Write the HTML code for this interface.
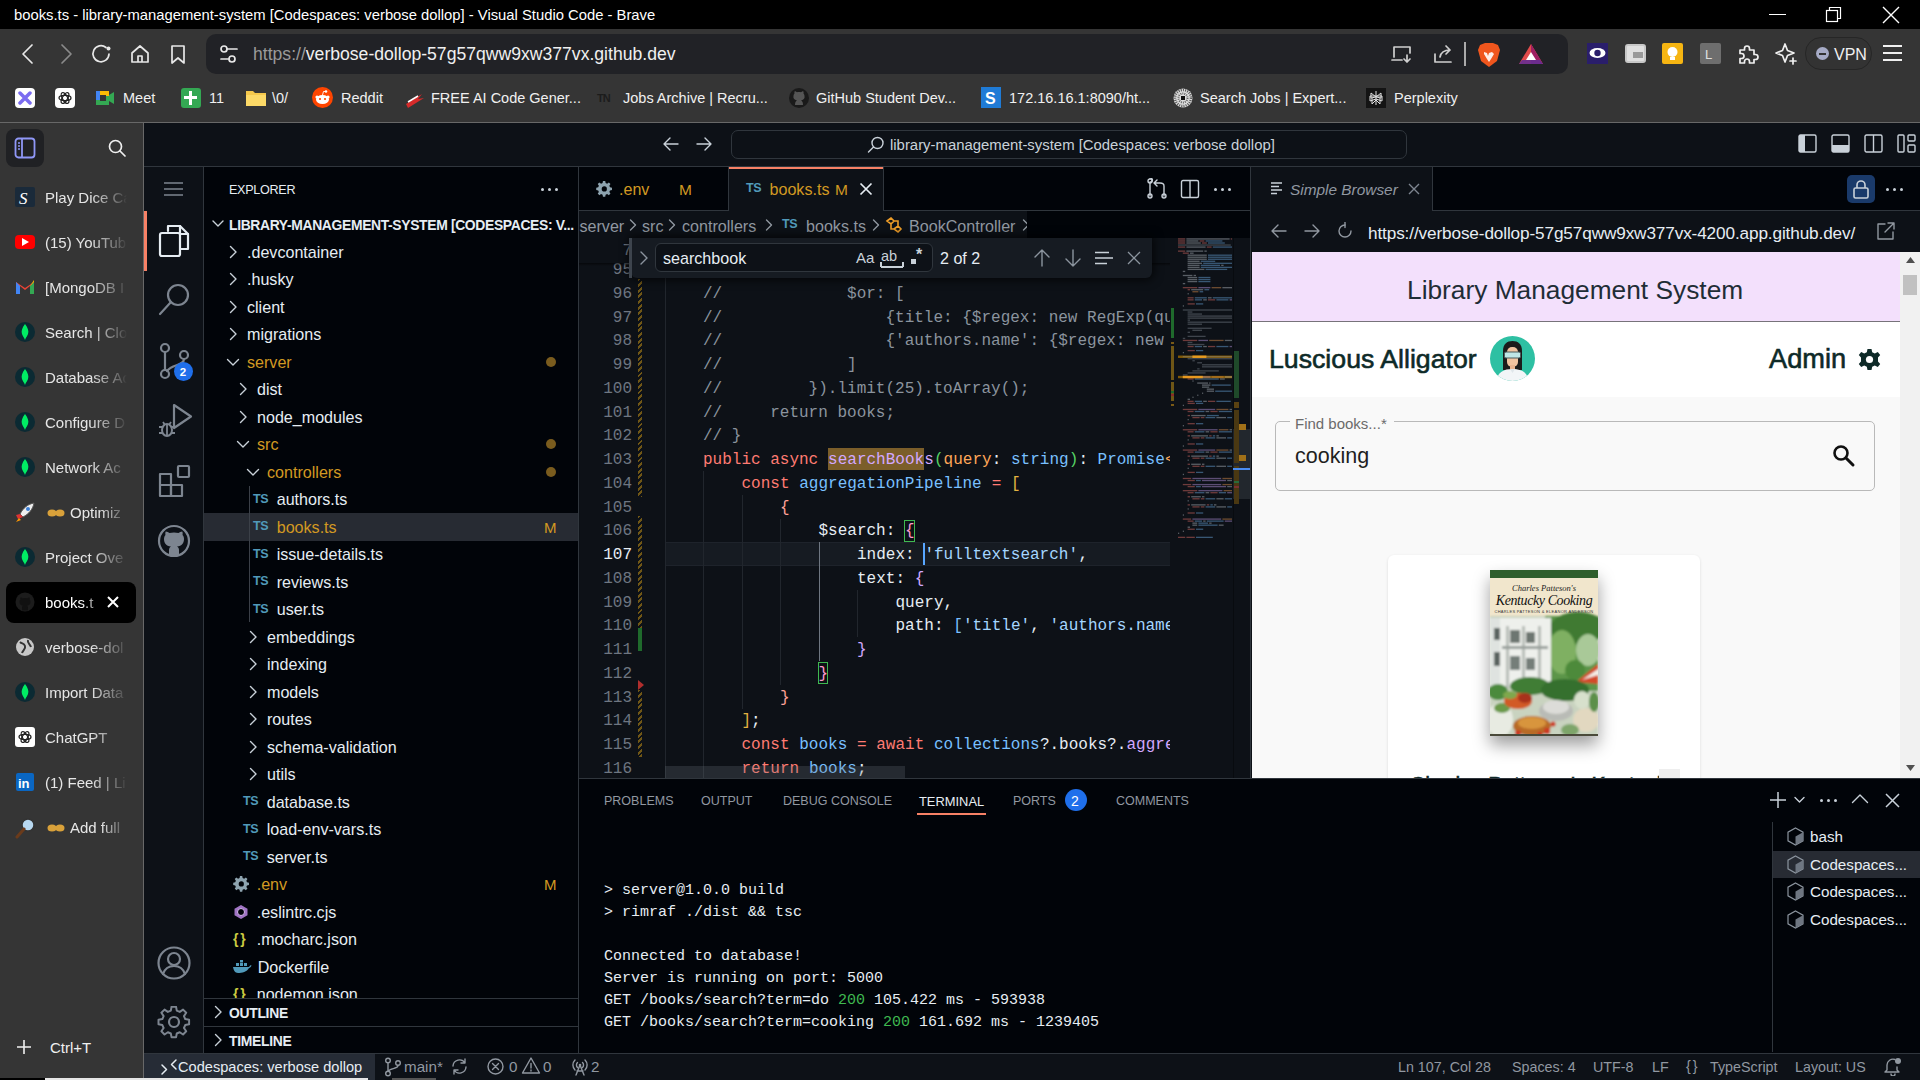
<!DOCTYPE html><html><head><meta charset="utf-8"><style>
*{margin:0;padding:0;box-sizing:border-box}
html,body{width:1920px;height:1080px;overflow:hidden;background:#000}
body{position:relative;font-family:"Liberation Sans",sans-serif}
.a{position:absolute}
.t{white-space:pre}
.m{font-family:"Liberation Mono",monospace}
.b{font-weight:bold}
</style></head><body><div class="a" style="left:0px;top:0px;width:1920px;height:29px;background:#000;"></div><div class="a t " style="left:14px;top:7.02px;font-size:14.8px;line-height:17.76px;color:#fff;">books.ts - library-management-system [Codespaces: verbose dollop] - Visual Studio Code - Brave</div><div class="a" style="left:1769px;top:14px;width:17px;height:1px;background:#fff;"></div><svg class="a" style="left:1824px;top:5px;" width="20" height="20" viewBox="0 0 20 20"><rect x="2.5" y="5.5" width="11" height="11" fill="none" stroke="#fff" stroke-width="1.2"/><path d="M5.5 5.5V2.5h11v11h-3" fill="none" stroke="#fff" stroke-width="1.2"/></svg><svg class="a" style="left:1882px;top:6px;" width="18" height="18" viewBox="0 0 18 18"><path d="M1 1L17 17M17 1L1 17" stroke="#fff" stroke-width="1.4"/></svg><div class="a" style="left:0px;top:29px;width:1920px;height:94px;background:#353535;"></div><div class="a" style="left:0px;top:122px;width:1920px;height:1px;background:#686868;"></div><svg class="a" style="left:18px;top:42px;" width="20" height="24" viewBox="0 0 20 24"><path d="M14 3L5 12L14 21" stroke="#e8e8e8" fill="none" stroke-width="1.7" stroke-linecap="round" stroke-linejoin="round"/></svg><svg class="a" style="left:56px;top:42px;" width="20" height="24" viewBox="0 0 20 24"><path d="M6 3L15 12L6 21" stroke="#8a8a8a" fill="none" stroke-width="1.7" stroke-linecap="round" stroke-linejoin="round"/></svg><svg class="a" style="left:90px;top:43px;" width="24" height="22" viewBox="0 0 24 22"><path d="M19 11A8 8 0 1 1 16 4.5" stroke="#e8e8e8" fill="none" stroke-width="1.7" stroke-linecap="round" stroke-linejoin="round"/><circle cx="18.5" cy="5.5" r="2" fill="#e8e8e8"/></svg><svg class="a" style="left:130px;top:44px;" width="20" height="20" viewBox="0 0 20 20"><path d="M2 9L10 2L18 9V18H2Z M8 18V12H12V18" stroke="#e8e8e8" fill="none" stroke-width="1.7" stroke-linecap="round" stroke-linejoin="round"/></svg><svg class="a" style="left:169px;top:44px;" width="18" height="20" viewBox="0 0 18 20"><path d="M3 2H15V19L9 14L3 19Z" stroke="#e8e8e8" fill="none" stroke-width="1.7" stroke-linecap="round" stroke-linejoin="round"/></svg><div class="a" style="left:206px;top:34px;width:1362px;height:40px;background:#212226;border-radius:10px"></div><svg class="a" style="left:218px;top:44px;" width="22" height="20" viewBox="0 0 22 20"><circle cx="6" cy="5" r="3" stroke="#e8e8e8" fill="none" stroke-width="1.7" stroke-linecap="round" stroke-linejoin="round"/><path d="M9 5H19" stroke="#e8e8e8" fill="none" stroke-width="1.7" stroke-linecap="round" stroke-linejoin="round"/><circle cx="14" cy="15" r="3" stroke="#e8e8e8" fill="none" stroke-width="1.7" stroke-linecap="round" stroke-linejoin="round"/><path d="M3 15H11" stroke="#e8e8e8" fill="none" stroke-width="1.7" stroke-linecap="round" stroke-linejoin="round"/></svg><div class="a t " style="left:253px;top:44.29px;font-size:17.6px;line-height:21.12px;color:#f0f0f0;"><span style="color:#9a9a9a">https://</span>verbose-dollop-57g57qww9xw377vx.github.dev</div><svg class="a" style="left:1390px;top:43px;" width="24" height="22" viewBox="0 0 24 22"><path d="M4 14V4H20V10 M2 17H12 M17 12V19 M14 16L17 19L20 16" stroke="#cfcfcf" fill="none" stroke-width="1.7" stroke-linecap="round" stroke-linejoin="round"/></svg><svg class="a" style="left:1432px;top:42px;" width="24" height="24" viewBox="0 0 24 24"><path d="M3 12V20H19 M8 15C9 10 13 8 18 8 M14 4L18 8L14 12" stroke="#cfcfcf" fill="none" stroke-width="1.7" stroke-linecap="round" stroke-linejoin="round"/></svg><div class="a" style="left:1464px;top:42px;width:2px;height:24px;background:#aaaaaa;"></div><svg class="a" style="left:1476px;top:41px;" width="26" height="28" viewBox="0 0 26 28"><path d="M4 4L9 2H17L22 4L24 9L21 20L13 26L5 20L2 9Z" fill="#f0561d"/><path d="M8 11L11 12L12 15L13 12L16 11L18 13L15 18L13 21L11 18L8 13Z" fill="#fff" opacity=".9"/></svg><svg class="a" style="left:1518px;top:42px;" width="26" height="24" viewBox="0 0 26 24"><path d="M13 2L25 22H1Z" fill="#e14b4b"/><path d="M13 2L25 22H13Z" fill="#9e1f63"/><path d="M13 10L18 18H8Z" fill="#fff"/><path d="M1 22H25L22 18H4Z" fill="#662d91" opacity=".9"/></svg><div class="a" style="left:1587px;top:43px;width:21px;height:21px;background:#2a1e6b;"></div><svg class="a" style="left:1589px;top:47px;" width="17" height="12" viewBox="0 0 17 12"><ellipse cx="8.5" cy="6" rx="8" ry="5" fill="#fff"/><circle cx="8.5" cy="6" r="3.2" fill="#2a1e6b"/></svg><div class="a" style="left:1625px;top:44px;width:21px;height:19px;background:#e0e0e0;border-radius:3px;border:2px solid #c8c8c8"></div><div class="a" style="left:1633px;top:52px;width:10px;height:6px;background:#9a9a9a;"></div><div class="a" style="left:1662px;top:43px;width:21px;height:21px;background:#f6b512;border-radius:2px"></div><svg class="a" style="left:1666px;top:46px;" width="13" height="15" viewBox="0 0 13 15"><circle cx="6.5" cy="6" r="5" fill="#fff"/><rect x="4" y="11" width="5" height="3" fill="#fff"/></svg><div class="a" style="left:1700px;top:43px;width:21px;height:21px;background:#6e6e6e;border-radius:2px"></div><div class="a t " style="left:1705px;top:47.14px;font-size:13px;line-height:15.60px;color:#e0e0e0;">L</div><svg class="a" style="left:1736px;top:42px;" width="24" height="24" viewBox="0 0 24 24"><path d="M4 8H8.5V6.5A2.5 2.5 0 0 1 13.5 6.5V8H18V12.5H19.5A2.5 2.5 0 0 1 19.5 17.5H18V21H13.5V19.5A2.5 2.5 0 0 0 8.5 19.5V21H4V16.5H5.5A2.5 2.5 0 0 0 5.5 11.5H4Z" stroke="#f0f0f0" fill="none" stroke-width="1.7" stroke-linecap="round" stroke-linejoin="round"/></svg><svg class="a" style="left:1774px;top:42px;" width="24" height="24" viewBox="0 0 24 24"><path d="M11 2L13.5 8.5L20 11L13.5 13.5L11 20L8.5 13.5L2 11L8.5 8.5Z" stroke="#f0f0f0" fill="none" stroke-width="1.7" stroke-linecap="round" stroke-linejoin="round"/><path d="M19 16V22M16 19H22" stroke="#f0f0f0" fill="none" stroke-width="1.7" stroke-linecap="round" stroke-linejoin="round"/></svg><div class="a" style="left:1805px;top:37px;width:67px;height:33px;background:transparent;border-radius:16px;border:1.5px solid #262626;background:#333333"></div><div class="a" style="left:1816px;top:47px;width:13px;height:13px;background:#a6abc6;border-radius:50%"></div><div class="a" style="left:1819px;top:53px;width:7px;height:1.6px;background:#333;"></div><div class="a t " style="left:1834px;top:45.28px;font-size:16px;line-height:19.20px;color:#f0f0f0;">VPN</div><svg class="a" style="left:1882px;top:44px;" width="22" height="18" viewBox="0 0 22 18"><path d="M1 2H20M1 9H20M1 16H20" stroke="#f0f0f0" stroke-width="1.8"/></svg><div class="a" style="left:15px;top:88px;width:20px;height:20px;background:#fff;border-radius:4px"></div><svg class="a" style="left:18px;top:91px;" width="14" height="14" viewBox="0 0 14 14"><path d="M2 2L12 12M12 2L2 12" stroke="#7b6cf0" stroke-width="3.5" stroke-linecap="round"/></svg><div class="a" style="left:55px;top:88px;width:20px;height:20px;background:#fff;border-radius:4px"></div><svg class="a" style="left:57px;top:90px;" width="16" height="16" viewBox="0 0 16 16"><g fill="none" stroke="#222" stroke-width="1.3"><ellipse cx="8" cy="8" rx="6" ry="2.6"/><ellipse cx="8" cy="8" rx="6" ry="2.6" transform="rotate(60 8 8)"/><ellipse cx="8" cy="8" rx="6" ry="2.6" transform="rotate(120 8 8)"/></g></svg><svg class="a" style="left:95px;top:89px;" width="20" height="18" viewBox="0 0 20 18"><rect x="1" y="2" width="13" height="14" fill="#34a853"/><rect x="1" y="2" width="13" height="5" fill="#fbbc04"/><rect x="1" y="2" width="4" height="9" fill="#4285f4"/><rect x="5" y="6" width="6" height="6" fill="#353535"/><path d="M14 6L19 3V15L14 12Z" fill="#34a853"/></svg><div class="a t " style="left:123px;top:90.21px;font-size:14.5px;line-height:17.40px;color:#f0f0f0;">Meet</div><div class="a" style="left:181px;top:88px;width:20px;height:20px;background:#34a853;border-radius:3px"></div><div class="a" style="left:189px;top:91px;width:3px;height:14px;background:#fff;"></div><div class="a" style="left:184px;top:96px;width:13px;height:3px;background:#fff;"></div><div class="a t " style="left:209px;top:90.21px;font-size:14.5px;line-height:17.40px;color:#f0f0f0;">11</div><svg class="a" style="left:245px;top:89px;" width="22" height="18" viewBox="0 0 22 18"><path d="M1 2H8L10 4H21V17H1Z" fill="#f5c84c"/><rect x="1" y="6" width="20" height="11" fill="#fcd967"/></svg><div class="a t " style="left:272px;top:90.21px;font-size:14.5px;line-height:17.40px;color:#f0f0f0;">\0/</div><div class="a" style="left:312px;top:87px;width:21px;height:21px;background:#ff4500;border-radius:50%"></div><svg class="a" style="left:314px;top:89px;" width="17" height="17" viewBox="0 0 17 17"><ellipse cx="8.5" cy="10.5" rx="6.5" ry="4.5" fill="#fff"/><circle cx="3" cy="8" r="1.6" fill="#fff"/><circle cx="14" cy="8" r="1.6" fill="#fff"/><circle cx="12" cy="2.5" r="1.3" fill="#fff"/><path d="M8.5 6L9.5 2.5L12 2.5" stroke="#fff" stroke-width="0.9" fill="none"/><circle cx="6" cy="10" r="1.1" fill="#ff4500"/><circle cx="11" cy="10" r="1.1" fill="#ff4500"/></svg><div class="a t " style="left:341px;top:90.21px;font-size:14.5px;line-height:17.40px;color:#f0f0f0;">Reddit</div><svg class="a" style="left:404px;top:88px;" width="22" height="20" viewBox="0 0 22 20"><path d="M2 16L18 6L14 11L20 10L4 20Z" fill="#d62a2a"/><path d="M4 14L14 8" stroke="#fff" stroke-width="1.5"/></svg><div class="a t " style="left:431px;top:90.21px;font-size:14.5px;line-height:17.40px;color:#f0f0f0;">FREE AI Code Gener...</div><div class="a t " style="left:597px;top:92.38px;font-size:11px;line-height:13.20px;color:#1c1c1c;font-weight:bold;letter-spacing:-1px">TN</div><div class="a t " style="left:623px;top:90.21px;font-size:14.5px;line-height:17.40px;color:#f0f0f0;">Jobs Archive | Recru...</div><svg class="a" style="left:789px;top:88px;" width="20" height="20" viewBox="0 0 20 20"><circle cx="10" cy="10" r="10" fill="#1a1a1a"/><path d="M6 17C6 14 7 13 8 12.5C5 12 4 10 4.5 8C4.5 7 5 6 5.5 5.5C5.3 4.8 5.3 4 5.7 3.2C6.5 3.2 7.5 3.8 8 4.2C9.3 3.9 10.7 3.9 12 4.2C12.5 3.8 13.5 3.2 14.3 3.2C14.7 4 14.7 4.8 14.5 5.5C15 6 15.5 7 15.5 8C16 10 15 12 12 12.5C13 13 14 14 14 17" fill="#555"/></svg><div class="a t " style="left:816px;top:90.21px;font-size:14.5px;line-height:17.40px;color:#f0f0f0;">GitHub Student Dev...</div><div class="a" style="left:981px;top:87px;width:20px;height:21px;background:#1f7bd6;"></div><div class="a t " style="left:985px;top:89.28px;font-size:16px;line-height:19.20px;color:#fff;font-weight:bold">S</div><div class="a t " style="left:1009px;top:90.21px;font-size:14.5px;line-height:17.40px;color:#f0f0f0;">172.16.16.1:8090/ht...</div><svg class="a" style="left:1173px;top:88px;" width="20" height="20" viewBox="0 0 20 20"><circle cx="10" cy="10" r="9.5" fill="#ddd"/><circle cx="10" cy="10" r="8" fill="none" stroke="#555" stroke-width="2.5" stroke-dasharray="1 1.2"/><circle cx="10" cy="10" r="4.5" fill="none" stroke="#666" stroke-width="2" stroke-dasharray="1 1"/><rect x="8" y="8" width="4" height="4" fill="#111"/></svg><div class="a t " style="left:1200px;top:90.21px;font-size:14.5px;line-height:17.40px;color:#f0f0f0;">Search Jobs | Expert...</div><div class="a" style="left:1366px;top:88px;width:20px;height:20px;background:#141414;"></div><svg class="a" style="left:1368px;top:90px;" width="16" height="16" viewBox="0 0 16 16"><path d="M8 1V15M3 3L8 7L13 3M3 3V8L8 7M13 3V8L8 7M2 6H14V11L8 9L2 11Z M4 8V14L8 10L12 14V8" stroke="#e0e0e0" stroke-width="1" fill="none"/></svg><div class="a t " style="left:1394px;top:90.21px;font-size:14.5px;line-height:17.40px;color:#f0f0f0;">Perplexity</div><div class="a" style="left:0px;top:123px;width:143px;height:957px;background:#353535;"></div><div class="a" style="left:143px;top:123px;width:1px;height:957px;background:#686868;"></div><div class="a" style="left:6px;top:129px;width:38px;height:38px;background:#202124;border-radius:8px"></div><svg class="a" style="left:14px;top:137px;" width="22" height="22" viewBox="0 0 22 22"><rect x="1.5" y="1.5" width="19" height="19" rx="3" fill="none" stroke="#8f97f7" stroke-width="1.8"/><path d="M8 1.5V20.5" stroke="#8f97f7" stroke-width="1.8"/><path d="M4 6H6M4 9H6M4 12H6" stroke="#8f97f7" stroke-width="1.4"/></svg><svg class="a" style="left:107px;top:138px;" width="20" height="20" viewBox="0 0 20 20"><circle cx="8.5" cy="8.5" r="6" fill="none" stroke="#f0f0f0" stroke-width="1.7"/><path d="M13 13L18 18" stroke="#f0f0f0" stroke-width="1.7" stroke-linecap="round"/></svg><div class="a" style="left:15px;top:187px;width:20px;height:20px;background:#1a2a3a;border-radius:2px"></div><div class="a t " style="left:19px;top:188.66px;font-size:17px;line-height:20.40px;color:#fff;font-style:italic;font-family:Liberation Serif">S</div><div class="a t " style="left:45px;top:188.90px;font-size:15px;line-height:18.00px;color:#e6e6e6;-webkit-mask-image:linear-gradient(90deg,#000 55%,rgba(0,0,0,.25) 92%,transparent 100%);width:82px;overflow:hidden">Play Dice Ca</div><div class="a" style="left:15px;top:235px;width:20px;height:14px;background:#ff0000;border-radius:4px"></div><svg class="a" style="left:22px;top:238px;" width="8" height="8" viewBox="0 0 8 8"><path d="M0 0L7 4L0 8Z" fill="#fff"/></svg><div class="a t " style="left:45px;top:233.90px;font-size:15px;line-height:18.00px;color:#e6e6e6;-webkit-mask-image:linear-gradient(90deg,#000 55%,rgba(0,0,0,.25) 92%,transparent 100%);width:82px;overflow:hidden">(15) YouTub</div><svg class="a" style="left:15px;top:279px;" width="20" height="16" viewBox="0 0 20 16"><path d="M1 3V15H5V7L10 11L15 7V15H19V3L10 9Z" fill="#ea4335"/><path d="M1 3V15H5V7Z" fill="#4285f4"/><path d="M15 7V15H19V3Z" fill="#34a853"/><path d="M15 7L19 3V1Z" fill="#fbbc04"/></svg><div class="a t " style="left:45px;top:278.90px;font-size:15px;line-height:18.00px;color:#e6e6e6;-webkit-mask-image:linear-gradient(90deg,#000 55%,rgba(0,0,0,.25) 92%,transparent 100%);width:82px;overflow:hidden">[MongoDB I</div><div class="a" style="left:15px;top:322px;width:20px;height:20px;background:#0b2a33;border-radius:50%"></div><svg class="a" style="left:20px;top:324px;" width="10" height="16" viewBox="0 0 10 16"><path d="M5 0C8 4 9 7 8 10C7.5 12 6 13 5 16C4 13 2.5 12 2 10C1 7 2 4 5 0Z" fill="#00ed64"/></svg><div class="a t " style="left:45px;top:323.90px;font-size:15px;line-height:18.00px;color:#e6e6e6;-webkit-mask-image:linear-gradient(90deg,#000 55%,rgba(0,0,0,.25) 92%,transparent 100%);width:82px;overflow:hidden">Search | Clo</div><div class="a" style="left:15px;top:367px;width:20px;height:20px;background:#0b2a33;border-radius:50%"></div><svg class="a" style="left:20px;top:369px;" width="10" height="16" viewBox="0 0 10 16"><path d="M5 0C8 4 9 7 8 10C7.5 12 6 13 5 16C4 13 2.5 12 2 10C1 7 2 4 5 0Z" fill="#00ed64"/></svg><div class="a t " style="left:45px;top:368.90px;font-size:15px;line-height:18.00px;color:#e6e6e6;-webkit-mask-image:linear-gradient(90deg,#000 55%,rgba(0,0,0,.25) 92%,transparent 100%);width:82px;overflow:hidden">Database Ac</div><div class="a" style="left:15px;top:412px;width:20px;height:20px;background:#0b2a33;border-radius:50%"></div><svg class="a" style="left:20px;top:414px;" width="10" height="16" viewBox="0 0 10 16"><path d="M5 0C8 4 9 7 8 10C7.5 12 6 13 5 16C4 13 2.5 12 2 10C1 7 2 4 5 0Z" fill="#00ed64"/></svg><div class="a t " style="left:45px;top:413.90px;font-size:15px;line-height:18.00px;color:#e6e6e6;-webkit-mask-image:linear-gradient(90deg,#000 55%,rgba(0,0,0,.25) 92%,transparent 100%);width:82px;overflow:hidden">Configure D</div><div class="a" style="left:15px;top:457px;width:20px;height:20px;background:#0b2a33;border-radius:50%"></div><svg class="a" style="left:20px;top:459px;" width="10" height="16" viewBox="0 0 10 16"><path d="M5 0C8 4 9 7 8 10C7.5 12 6 13 5 16C4 13 2.5 12 2 10C1 7 2 4 5 0Z" fill="#00ed64"/></svg><div class="a t " style="left:45px;top:458.90px;font-size:15px;line-height:18.00px;color:#e6e6e6;-webkit-mask-image:linear-gradient(90deg,#000 55%,rgba(0,0,0,.25) 92%,transparent 100%);width:82px;overflow:hidden">Network Ac</div><svg class="a" style="left:14px;top:501px;" width="22" height="22" viewBox="0 0 22 22"><path d="M20 2C14 3 9 7 6 13L9 16C15 13 19 8 20 2Z" fill="#eee" stroke="#555" stroke-width="1"/><circle cx="14" cy="8" r="2" fill="#3b7fd6"/><path d="M6 13L2 14L4 18L9 16" fill="#d33"/><path d="M5 17L2 21L7 19Z" fill="#f90"/></svg><svg class="a" style="left:47px;top:508px;" width="18" height="10" viewBox="0 0 18 10"><ellipse cx="5" cy="5" rx="4.5" ry="3.5" fill="#d9a13a"/><ellipse cx="13" cy="5" rx="4.5" ry="3.5" fill="#d9a13a"/></svg><div class="a t " style="left:70px;top:503.90px;font-size:15px;line-height:18.00px;color:#e6e6e6;-webkit-mask-image:linear-gradient(90deg,#000 55%,rgba(0,0,0,.25) 92%,transparent 100%);width:56px;overflow:hidden">Optimiz</div><div class="a" style="left:15px;top:547px;width:20px;height:20px;background:#0b2a33;border-radius:50%"></div><svg class="a" style="left:20px;top:549px;" width="10" height="16" viewBox="0 0 10 16"><path d="M5 0C8 4 9 7 8 10C7.5 12 6 13 5 16C4 13 2.5 12 2 10C1 7 2 4 5 0Z" fill="#00ed64"/></svg><div class="a t " style="left:45px;top:548.90px;font-size:15px;line-height:18.00px;color:#e6e6e6;-webkit-mask-image:linear-gradient(90deg,#000 55%,rgba(0,0,0,.25) 92%,transparent 100%);width:82px;overflow:hidden">Project Ove</div><div class="a" style="left:6px;top:582px;width:130px;height:41px;background:#000;border-radius:8px"></div><svg class="a" style="left:15px;top:592px;" width="20" height="20" viewBox="0 0 20 20"><circle cx="10" cy="10" r="9.5" fill="#1c1c1c"/><path d="M7 18.5V15.5C7 14.5 7.5 14 8 13.7C5.5 13.3 4.5 12 4.5 10C4.5 9 4.8 8.2 5.4 7.6C5.2 7 5.2 6.2 5.5 5.5C6.3 5.5 7.2 6 7.7 6.4C9.2 6 10.8 6 12.3 6.4C12.8 6 13.7 5.5 14.5 5.5C14.8 6.2 14.8 7 14.6 7.6C15.2 8.2 15.5 9 15.5 10C15.5 12 14.5 13.3 12 13.7C12.5 14 13 14.5 13 15.5V18.5" fill="#111"/></svg><div class="a t " style="left:45px;top:593.90px;font-size:15px;line-height:18.00px;color:#fff;width:60px;overflow:hidden;-webkit-mask-image:linear-gradient(90deg,#000 60%,rgba(0,0,0,.3) 95%)">books.t</div><svg class="a" style="left:106px;top:595px;" width="14" height="14" viewBox="0 0 14 14"><path d="M2 2L12 12M12 2L2 12" stroke="#fff" stroke-width="2"/></svg><div class="a" style="left:16px;top:638px;width:18px;height:18px;background:#c8c8c8;border-radius:50%"></div><svg class="a" style="left:16px;top:638px;" width="18" height="18" viewBox="0 0 18 18"><path d="M4 4C6 6 8 5 9 8C10 11 7 12 6 15M12 2C11 5 14 6 15 9" stroke="#353535" stroke-width="2" fill="none"/></svg><div class="a t " style="left:45px;top:638.90px;font-size:15px;line-height:18.00px;color:#e6e6e6;-webkit-mask-image:linear-gradient(90deg,#000 55%,rgba(0,0,0,.25) 92%,transparent 100%);width:82px;overflow:hidden">verbose-dol</div><div class="a" style="left:15px;top:682px;width:20px;height:20px;background:#0b2a33;border-radius:50%"></div><svg class="a" style="left:20px;top:684px;" width="10" height="16" viewBox="0 0 10 16"><path d="M5 0C8 4 9 7 8 10C7.5 12 6 13 5 16C4 13 2.5 12 2 10C1 7 2 4 5 0Z" fill="#00ed64"/></svg><div class="a t " style="left:45px;top:683.90px;font-size:15px;line-height:18.00px;color:#e6e6e6;-webkit-mask-image:linear-gradient(90deg,#000 55%,rgba(0,0,0,.25) 92%,transparent 100%);width:82px;overflow:hidden">Import Data</div><div class="a" style="left:15px;top:727px;width:20px;height:20px;background:#fff;border-radius:3px"></div><svg class="a" style="left:17px;top:729px;" width="16" height="16" viewBox="0 0 16 16"><g fill="none" stroke="#222" stroke-width="1.3"><ellipse cx="8" cy="8" rx="6" ry="2.6"/><ellipse cx="8" cy="8" rx="6" ry="2.6" transform="rotate(60 8 8)"/><ellipse cx="8" cy="8" rx="6" ry="2.6" transform="rotate(120 8 8)"/></g></svg><div class="a t " style="left:45px;top:728.90px;font-size:15px;line-height:18.00px;color:#e6e6e6;-webkit-mask-image:linear-gradient(90deg,#000 55%,rgba(0,0,0,.25) 92%,transparent 100%);width:82px;overflow:hidden">ChatGPT</div><div class="a" style="left:16px;top:773px;width:18px;height:18px;background:#0a66c2;border-radius:2px"></div><div class="a t " style="left:18px;top:776.14px;font-size:13px;line-height:15.60px;color:#fff;font-weight:bold">in</div><div class="a t " style="left:45px;top:773.90px;font-size:15px;line-height:18.00px;color:#e6e6e6;-webkit-mask-image:linear-gradient(90deg,#000 55%,rgba(0,0,0,.25) 92%,transparent 100%);width:82px;overflow:hidden">(1) Feed | Li</div><svg class="a" style="left:14px;top:817px;" width="22" height="22" viewBox="0 0 22 22"><circle cx="14" cy="8" r="6" fill="#b8d8f0" stroke="#333" stroke-width="1.5"/><path d="M10 12L3 20" stroke="#6b3b1b" stroke-width="3" stroke-linecap="round"/></svg><svg class="a" style="left:47px;top:823px;" width="18" height="10" viewBox="0 0 18 10"><ellipse cx="5" cy="5" rx="4.5" ry="3.5" fill="#d9a13a"/><ellipse cx="13" cy="5" rx="4.5" ry="3.5" fill="#d9a13a"/></svg><div class="a t " style="left:70px;top:818.90px;font-size:15px;line-height:18.00px;color:#e6e6e6;-webkit-mask-image:linear-gradient(90deg,#000 55%,rgba(0,0,0,.25) 92%,transparent 100%);width:56px;overflow:hidden">Add full</div><svg class="a" style="left:16px;top:1039px;" width="16" height="16" viewBox="0 0 16 16"><path d="M8 1V15M1 8H15" stroke="#f0f0f0" stroke-width="1.6"/></svg><div class="a t " style="left:50px;top:1038.90px;font-size:15px;line-height:18.00px;color:#f0f0f0;">Ctrl+T</div><div class="a" style="left:144px;top:123px;width:1776px;height:957px;background:#0d1117;"></div><div class="a" style="left:144px;top:166px;width:1776px;height:1px;background:#30363d;"></div><svg class="a" style="left:662px;top:136px;" width="18" height="16" viewBox="0 0 18 16"><path d="M2 8H16M8 2L2 8L8 14" stroke="#c9d1d9" fill="none" stroke-width="1.4" stroke-linecap="round" stroke-linejoin="round"/></svg><svg class="a" style="left:695px;top:136px;" width="18" height="16" viewBox="0 0 18 16"><path d="M2 8H16M10 2L16 8L10 14" stroke="#c9d1d9" fill="none" stroke-width="1.4" stroke-linecap="round" stroke-linejoin="round"/></svg><div class="a" style="left:731px;top:130px;width:676px;height:29px;background:#0d1117;border:1px solid #30363d;border-radius:7px;background:#0d1117"></div><svg class="a" style="left:867px;top:136px;" width="18" height="18" viewBox="0 0 18 18"><circle cx="10.5" cy="7" r="5.5" stroke="#c9d1d9" fill="none" stroke-width="1.4" stroke-linecap="round" stroke-linejoin="round"/><path d="M6.5 11L1.5 16" stroke="#c9d1d9" fill="none" stroke-width="1.4" stroke-linecap="round" stroke-linejoin="round"/></svg><div class="a t " style="left:890px;top:136.96px;font-size:14.9px;line-height:17.88px;color:#c9d1d9;">library-management-system [Codespaces: verbose dollop]</div><svg class="a" style="left:1798px;top:134px;" width="20" height="20" viewBox="0 0 20 20"><rect x="1" y="1" width="17" height="17" rx="1.5" stroke="#c9d1d9" fill="none" stroke-width="1.4" stroke-linecap="round" stroke-linejoin="round"/><rect x="1" y="1" width="6" height="17" fill="#c9d1d9"/></svg><svg class="a" style="left:1831px;top:134px;" width="20" height="20" viewBox="0 0 20 20"><rect x="1" y="1" width="17" height="17" rx="1.5" stroke="#c9d1d9" fill="none" stroke-width="1.4" stroke-linecap="round" stroke-linejoin="round"/><rect x="1" y="11" width="17" height="7" fill="#c9d1d9"/></svg><svg class="a" style="left:1864px;top:134px;" width="20" height="20" viewBox="0 0 20 20"><rect x="1" y="1" width="17" height="17" rx="1.5" stroke="#c9d1d9" fill="none" stroke-width="1.4" stroke-linecap="round" stroke-linejoin="round"/><path d="M9.5 1V18" stroke="#c9d1d9" stroke-width="1.4"/></svg><svg class="a" style="left:1897px;top:134px;" width="20" height="20" viewBox="0 0 20 20"><rect x="1" y="1" width="6" height="17" rx="1" stroke="#c9d1d9" fill="none" stroke-width="1.4" stroke-linecap="round" stroke-linejoin="round"/><rect x="11" y="1" width="7" height="6" rx="1" stroke="#c9d1d9" fill="none" stroke-width="1.4" stroke-linecap="round" stroke-linejoin="round"/><rect x="11" y="11" width="7" height="7" rx="1" stroke="#c9d1d9" fill="none" stroke-width="1.4" stroke-linecap="round" stroke-linejoin="round"/></svg><div class="a" style="left:203px;top:167px;width:1px;height:886px;background:#30363d;"></div><svg class="a" style="left:163px;top:181px;" width="22" height="16" viewBox="0 0 22 16"><path d="M1 2H20M1 8H20M1 14H20" stroke="#7d8590" stroke-width="1.4"/></svg><div class="a" style="left:144px;top:211px;width:3px;height:60px;background:#f78166;"></div><svg class="a" style="left:157px;top:223px;" width="34" height="36" viewBox="0 0 34 36"><path d="M11 8V3H23L31 11V26H24" stroke="#e6edf3" fill="none" stroke-width="2.2" stroke-linecap="round" stroke-linejoin="round"/><path d="M23 3V11H31" stroke="#e6edf3" fill="none" stroke-width="2.2" stroke-linecap="round" stroke-linejoin="round"/><rect x="3" y="10" width="20" height="23" rx="2" stroke="#e6edf3" fill="none" stroke-width="2.2" stroke-linecap="round" stroke-linejoin="round"/></svg><svg class="a" style="left:157px;top:281px;" width="36" height="36" viewBox="0 0 36 36"><circle cx="21" cy="14" r="10" stroke="#7d8590" fill="none" stroke-width="2.2" stroke-linecap="round" stroke-linejoin="round"/><path d="M14 21L3 33" stroke="#7d8590" fill="none" stroke-width="2.2" stroke-linecap="round" stroke-linejoin="round"/></svg><svg class="a" style="left:158px;top:342px;" width="34" height="38" viewBox="0 0 34 38"><circle cx="7" cy="6" r="4" stroke="#7d8590" fill="none" stroke-width="2.2" stroke-linecap="round" stroke-linejoin="round"/><circle cx="7" cy="32" r="4" stroke="#7d8590" fill="none" stroke-width="2.2" stroke-linecap="round" stroke-linejoin="round"/><circle cx="26" cy="13" r="4" stroke="#7d8590" fill="none" stroke-width="2.2" stroke-linecap="round" stroke-linejoin="round"/><path d="M7 10V28M26 17C26 24 14 22 9 29" stroke="#7d8590" fill="none" stroke-width="2.2" stroke-linecap="round" stroke-linejoin="round"/></svg><div class="a" style="left:174px;top:362px;width:19px;height:19px;background:#1f6feb;border-radius:50%"></div><div class="a t " style="left:179.8px;top:365.57px;font-size:11.5px;line-height:13.80px;color:#fff;font-weight:bold">2</div><svg class="a" style="left:155px;top:400px;" width="40" height="40" viewBox="0 0 40 40"><path d="M19 5L36 16.5L19 28Z" stroke="#7d8590" fill="none" stroke-width="2.2" stroke-linecap="round" stroke-linejoin="round"/><ellipse cx="12" cy="30" rx="5" ry="6" fill="#0d1117" stroke="#7d8590" stroke-width="2"/><path d="M4 27H8M4 33H8M16 27H20M16 33H20M8 22L10 25M16 22L14 25M12 24V36" stroke="#7d8590" stroke-width="1.8"/></svg><svg class="a" style="left:157px;top:463px;" width="36" height="36" viewBox="0 0 36 36"><rect x="3" y="11" width="11" height="11" stroke="#7d8590" fill="none" stroke-width="2.2" stroke-linecap="round" stroke-linejoin="round"/><rect x="3" y="22" width="11" height="11" stroke="#7d8590" fill="none" stroke-width="2.2" stroke-linecap="round" stroke-linejoin="round"/><rect x="14" y="22" width="11" height="11" stroke="#7d8590" fill="none" stroke-width="2.2" stroke-linecap="round" stroke-linejoin="round"/><rect x="21" y="3" width="11" height="11" rx="1" stroke="#7d8590" fill="none" stroke-width="2.2" stroke-linecap="round" stroke-linejoin="round"/></svg><svg class="a" style="left:156px;top:523px;" width="36" height="36" viewBox="0 0 36 36"><circle cx="18" cy="18" r="15" stroke="#7d8590" fill="none" stroke-width="2.2" stroke-linecap="round" stroke-linejoin="round"/><path d="M13 32V27C13 25 14 24 15 23.5C10 23 8 20 8 16C8 14.5 8.5 13 9.5 12C9.2 11 9.2 9.5 9.8 8.5C11 8.5 12.5 9.3 13.5 10C16.3 9.3 19.7 9.3 22.5 10C23.5 9.3 25 8.5 26.2 8.5C26.8 9.5 26.8 11 26.5 12C27.5 13 28 14.5 28 16C28 20 26 23 21 23.5C22 24 23 25 23 27V32Z" fill="#7d8590"/></svg><svg class="a" style="left:156px;top:945px;" width="36" height="36" viewBox="0 0 36 36"><circle cx="18" cy="18" r="15.5" stroke="#7d8590" fill="none" stroke-width="2.2" stroke-linecap="round" stroke-linejoin="round"/><circle cx="18" cy="14" r="6" stroke="#7d8590" fill="none" stroke-width="2.2" stroke-linecap="round" stroke-linejoin="round"/><path d="M7 29C9 23 13 21 18 21C23 21 27 23 29 29" stroke="#7d8590" fill="none" stroke-width="2.2" stroke-linecap="round" stroke-linejoin="round"/></svg><svg class="a" style="left:157px;top:1006px;" width="34" height="34" viewBox="0 0 34 34"><path d="M14.5 2.5H19.5L20.3 6.8L23.6 8.2L27.3 5.7L30.8 9.2L28.3 12.9L29.7 16.2L34 17V22L29.7 22.8L28.3 26.1L30.8 29.8L27.3 33.3L23.6 30.8L20.3 32.2L19.5 36.5H14.5L13.7 32.2L10.4 30.8L6.7 33.3L3.2 29.8L5.7 26.1L4.3 22.8L0 22V17L4.3 16.2L5.7 12.9L3.2 9.2L6.7 5.7L10.4 8.2L13.7 6.8Z" transform="translate(1.5 -1.5) scale(0.9)" stroke="#7d8590" fill="none" stroke-width="2.2" stroke-linecap="round" stroke-linejoin="round"/><circle cx="17" cy="16" r="5" stroke="#7d8590" fill="none" stroke-width="2.2" stroke-linecap="round" stroke-linejoin="round"/></svg><div class="a" style="left:204px;top:167px;width:375px;height:886px;background:#010409;"></div><div class="a" style="left:578px;top:167px;width:1px;height:886px;background:#30363d;"></div><div class="a t " style="left:229px;top:182.89px;font-size:12.6px;line-height:15.12px;color:#e6edf3;letter-spacing:-0.3px">EXPLORER</div><div class="a" style="left:541px;top:188px;width:3px;height:3px;background:#c9d1d9;border-radius:50%"></div><div class="a" style="left:548px;top:188px;width:3px;height:3px;background:#c9d1d9;border-radius:50%"></div><div class="a" style="left:555px;top:188px;width:3px;height:3px;background:#c9d1d9;border-radius:50%"></div><svg class="a" style="left:211px;top:218px;" width="14" height="12" viewBox="0 0 14 12"><path d="M2 3L7 8L12 3" stroke="#c9d1d9" fill="none" stroke-width="1.4" stroke-linecap="round" stroke-linejoin="round"/></svg><div class="a t " style="left:229px;top:217.08px;font-size:13.9px;line-height:16.68px;color:#e6edf3;font-weight:bold;letter-spacing:-0.35px">LIBRARY-MANAGEMENT-SYSTEM [CODESPACES: V...</div><div class="a" style="left:204px;top:238px;width:374px;height:760px;overflow:hidden"><svg class="a" style="left:24px;top:6.75px;" width="10" height="14" viewBox="0 0 10 14"><path d="M2.5 1.5L8 7L2.5 12.5" stroke="#c9d1d9" fill="none" stroke-width="1.4" stroke-linecap="round" stroke-linejoin="round"/></svg><div class="a t " style="left:43px;top:4.97px;font-size:16.1px;line-height:19.32px;color:#e6edf3;">.devcontainer</div><svg class="a" style="left:24px;top:34.25px;" width="10" height="14" viewBox="0 0 10 14"><path d="M2.5 1.5L8 7L2.5 12.5" stroke="#c9d1d9" fill="none" stroke-width="1.4" stroke-linecap="round" stroke-linejoin="round"/></svg><div class="a t " style="left:43px;top:32.47px;font-size:16.1px;line-height:19.32px;color:#e6edf3;">.husky</div><svg class="a" style="left:24px;top:61.75px;" width="10" height="14" viewBox="0 0 10 14"><path d="M2.5 1.5L8 7L2.5 12.5" stroke="#c9d1d9" fill="none" stroke-width="1.4" stroke-linecap="round" stroke-linejoin="round"/></svg><div class="a t " style="left:43px;top:59.97px;font-size:16.1px;line-height:19.32px;color:#e6edf3;">client</div><svg class="a" style="left:24px;top:89.25px;" width="10" height="14" viewBox="0 0 10 14"><path d="M2.5 1.5L8 7L2.5 12.5" stroke="#c9d1d9" fill="none" stroke-width="1.4" stroke-linecap="round" stroke-linejoin="round"/></svg><div class="a t " style="left:43px;top:87.47px;font-size:16.1px;line-height:19.32px;color:#e6edf3;">migrations</div><svg class="a" style="left:22px;top:118.75px;" width="14" height="10" viewBox="0 0 14 10"><path d="M1.5 2.5L7 8L12.5 2.5" stroke="#c9d1d9" fill="none" stroke-width="1.4" stroke-linecap="round" stroke-linejoin="round"/></svg><div class="a t " style="left:43px;top:114.97px;font-size:16.1px;line-height:19.32px;color:#d29922;">server</div><div class="a" style="left:342px;top:118.75px;width:10px;height:10px;background:#7a5c1e;border-radius:50%"></div><svg class="a" style="left:34px;top:144.25px;" width="10" height="14" viewBox="0 0 10 14"><path d="M2.5 1.5L8 7L2.5 12.5" stroke="#c9d1d9" fill="none" stroke-width="1.4" stroke-linecap="round" stroke-linejoin="round"/></svg><div class="a t " style="left:53px;top:142.47px;font-size:16.1px;line-height:19.32px;color:#e6edf3;">dist</div><svg class="a" style="left:34px;top:171.75px;" width="10" height="14" viewBox="0 0 10 14"><path d="M2.5 1.5L8 7L2.5 12.5" stroke="#c9d1d9" fill="none" stroke-width="1.4" stroke-linecap="round" stroke-linejoin="round"/></svg><div class="a t " style="left:53px;top:169.97px;font-size:16.1px;line-height:19.32px;color:#e6edf3;">node_modules</div><svg class="a" style="left:32px;top:201.25px;" width="14" height="10" viewBox="0 0 14 10"><path d="M1.5 2.5L7 8L12.5 2.5" stroke="#c9d1d9" fill="none" stroke-width="1.4" stroke-linecap="round" stroke-linejoin="round"/></svg><div class="a t " style="left:53px;top:197.47px;font-size:16.1px;line-height:19.32px;color:#d29922;">src</div><div class="a" style="left:342px;top:201.25px;width:10px;height:10px;background:#7a5c1e;border-radius:50%"></div><svg class="a" style="left:42px;top:228.75px;" width="14" height="10" viewBox="0 0 14 10"><path d="M1.5 2.5L7 8L12.5 2.5" stroke="#c9d1d9" fill="none" stroke-width="1.4" stroke-linecap="round" stroke-linejoin="round"/></svg><div class="a t " style="left:63px;top:224.97px;font-size:16.1px;line-height:19.32px;color:#d29922;">controllers</div><div class="a" style="left:342px;top:228.75px;width:10px;height:10px;background:#7a5c1e;border-radius:50%"></div><div class="a t " style="left:49px;top:253.70px;font-size:12.5px;line-height:15.00px;color:#519aba;font-weight:bold;letter-spacing:-0.5px">TS</div><div class="a t " style="left:72.7px;top:252.47px;font-size:16.1px;line-height:19.32px;color:#e6edf3;">authors.ts</div><div class="a" style="left:0px;top:275.0px;width:374px;height:27.5px;background:#272b33;"></div><div class="a t " style="left:49px;top:281.20px;font-size:12.5px;line-height:15.00px;color:#519aba;font-weight:bold;letter-spacing:-0.5px">TS</div><div class="a t " style="left:72.7px;top:279.97px;font-size:16.1px;line-height:19.32px;color:#d29922;">books.ts</div><div class="a t " style="left:340px;top:280.65px;font-size:15px;line-height:18.00px;color:#d29922;">M</div><div class="a t " style="left:49px;top:308.70px;font-size:12.5px;line-height:15.00px;color:#519aba;font-weight:bold;letter-spacing:-0.5px">TS</div><div class="a t " style="left:72.7px;top:307.47px;font-size:16.1px;line-height:19.32px;color:#e6edf3;">issue-details.ts</div><div class="a t " style="left:49px;top:336.20px;font-size:12.5px;line-height:15.00px;color:#519aba;font-weight:bold;letter-spacing:-0.5px">TS</div><div class="a t " style="left:72.7px;top:334.97px;font-size:16.1px;line-height:19.32px;color:#e6edf3;">reviews.ts</div><div class="a t " style="left:49px;top:363.70px;font-size:12.5px;line-height:15.00px;color:#519aba;font-weight:bold;letter-spacing:-0.5px">TS</div><div class="a t " style="left:72.7px;top:362.47px;font-size:16.1px;line-height:19.32px;color:#e6edf3;">user.ts</div><svg class="a" style="left:44px;top:391.75px;" width="10" height="14" viewBox="0 0 10 14"><path d="M2.5 1.5L8 7L2.5 12.5" stroke="#c9d1d9" fill="none" stroke-width="1.4" stroke-linecap="round" stroke-linejoin="round"/></svg><div class="a t " style="left:63px;top:389.97px;font-size:16.1px;line-height:19.32px;color:#e6edf3;">embeddings</div><svg class="a" style="left:44px;top:419.25px;" width="10" height="14" viewBox="0 0 10 14"><path d="M2.5 1.5L8 7L2.5 12.5" stroke="#c9d1d9" fill="none" stroke-width="1.4" stroke-linecap="round" stroke-linejoin="round"/></svg><div class="a t " style="left:63px;top:417.47px;font-size:16.1px;line-height:19.32px;color:#e6edf3;">indexing</div><svg class="a" style="left:44px;top:446.75px;" width="10" height="14" viewBox="0 0 10 14"><path d="M2.5 1.5L8 7L2.5 12.5" stroke="#c9d1d9" fill="none" stroke-width="1.4" stroke-linecap="round" stroke-linejoin="round"/></svg><div class="a t " style="left:63px;top:444.97px;font-size:16.1px;line-height:19.32px;color:#e6edf3;">models</div><svg class="a" style="left:44px;top:474.25px;" width="10" height="14" viewBox="0 0 10 14"><path d="M2.5 1.5L8 7L2.5 12.5" stroke="#c9d1d9" fill="none" stroke-width="1.4" stroke-linecap="round" stroke-linejoin="round"/></svg><div class="a t " style="left:63px;top:472.47px;font-size:16.1px;line-height:19.32px;color:#e6edf3;">routes</div><svg class="a" style="left:44px;top:501.75px;" width="10" height="14" viewBox="0 0 10 14"><path d="M2.5 1.5L8 7L2.5 12.5" stroke="#c9d1d9" fill="none" stroke-width="1.4" stroke-linecap="round" stroke-linejoin="round"/></svg><div class="a t " style="left:63px;top:499.97px;font-size:16.1px;line-height:19.32px;color:#e6edf3;">schema-validation</div><svg class="a" style="left:44px;top:529.25px;" width="10" height="14" viewBox="0 0 10 14"><path d="M2.5 1.5L8 7L2.5 12.5" stroke="#c9d1d9" fill="none" stroke-width="1.4" stroke-linecap="round" stroke-linejoin="round"/></svg><div class="a t " style="left:63px;top:527.47px;font-size:16.1px;line-height:19.32px;color:#e6edf3;">utils</div><div class="a t " style="left:39px;top:556.20px;font-size:12.5px;line-height:15.00px;color:#519aba;font-weight:bold;letter-spacing:-0.5px">TS</div><div class="a t " style="left:62.7px;top:554.97px;font-size:16.1px;line-height:19.32px;color:#e6edf3;">database.ts</div><div class="a t " style="left:39px;top:583.70px;font-size:12.5px;line-height:15.00px;color:#519aba;font-weight:bold;letter-spacing:-0.5px">TS</div><div class="a t " style="left:62.7px;top:582.47px;font-size:16.1px;line-height:19.32px;color:#e6edf3;">load-env-vars.ts</div><div class="a t " style="left:39px;top:611.20px;font-size:12.5px;line-height:15.00px;color:#519aba;font-weight:bold;letter-spacing:-0.5px">TS</div><div class="a t " style="left:62.7px;top:609.97px;font-size:16.1px;line-height:19.32px;color:#e6edf3;">server.ts</div><svg class="a" style="left:29px;top:638.25px;" width="16" height="16" viewBox="0 0 16 16"><path d="M6.8 0.5H9.2L9.6 2.6L11.2 3.3L13 2.1L14.7 3.8L13.5 5.6L14.2 7.2L16.3 7.6V10L14.2 10.4L13.5 12L14.7 13.8L13 15.5L11.2 14.3L9.6 15L9.2 17.1H6.8L6.4 15L4.8 14.3L3 15.5L1.3 13.8L2.5 12L1.8 10.4L-0.3 10V7.6L1.8 7.2L2.5 5.6L1.3 3.8L3 2.1L4.8 3.3L6.4 2.6Z" transform="translate(0.5 -0.5) scale(0.95)" fill="#8ea4b0"/><circle cx="8.3" cy="7.9" r="2.6" fill="#010409"/></svg><div class="a t " style="left:52.7px;top:637.47px;font-size:16.1px;line-height:19.32px;color:#d29922;">.env</div><div class="a t " style="left:340px;top:638.15px;font-size:15px;line-height:18.00px;color:#d29922;">M</div><svg class="a" style="left:29px;top:665.75px;" width="16" height="16" viewBox="0 0 16 16"><path d="M8 1L14.5 4.7V11.3L8 15L1.5 11.3V4.7Z" fill="#a074c4"/><circle cx="8" cy="8" r="3.5" fill="#010409" stroke="#d7b7f0" stroke-width="1"/></svg><div class="a t " style="left:52.7px;top:664.97px;font-size:16.1px;line-height:19.32px;color:#e6edf3;">.eslintrc.cjs</div><div class="a t " style="left:29px;top:692.77px;font-size:14px;line-height:16.80px;color:#cbcb41;font-weight:bold;letter-spacing:-1px">{ }</div><div class="a t " style="left:52.7px;top:692.47px;font-size:16.1px;line-height:19.32px;color:#e6edf3;">.mocharc.json</div><svg class="a" style="left:28px;top:721.75px;" width="20" height="14" viewBox="0 0 20 14"><path d="M1 7H17C18 5 19 5 19.5 5.5C19 7 18 8 17 8C15 12 10 13 6 13C3 13 1.5 10 1 7Z" fill="#519aba"/><rect x="4" y="3" width="3" height="3" fill="#519aba"/><rect x="8" y="3" width="3" height="3" fill="#519aba"/><rect x="8" y="0" width="3" height="2.5" fill="#519aba"/><rect x="12" y="3" width="3" height="3" fill="#519aba"/></svg><div class="a t " style="left:53.7px;top:719.97px;font-size:16.1px;line-height:19.32px;color:#e6edf3;">Dockerfile</div><div class="a t " style="left:29px;top:747.77px;font-size:14px;line-height:16.80px;color:#cbcb41;font-weight:bold;letter-spacing:-1px">{ }</div><div class="a t " style="left:52.7px;top:747.47px;font-size:16.1px;line-height:19.32px;color:#e6edf3;">nodemon.json</div><div class="a" style="left:45px;top:248px;width:1px;height:136px;background:#3b4048;"></div></div><div class="a" style="left:204px;top:998px;width:374px;height:1px;background:#30363d;"></div><div class="a" style="left:204px;top:1025.5px;width:374px;height:1px;background:#30363d;"></div><svg class="a" style="left:213px;top:1005px;" width="10" height="14" viewBox="0 0 10 14"><path d="M2.5 1.5L8 7L2.5 12.5" stroke="#c9d1d9" fill="none" stroke-width="1.4" stroke-linecap="round" stroke-linejoin="round"/></svg><div class="a t " style="left:229px;top:1005.08px;font-size:13.9px;line-height:16.68px;color:#e6edf3;font-weight:bold;letter-spacing:-0.3px">OUTLINE</div><svg class="a" style="left:213px;top:1032.5px;" width="10" height="14" viewBox="0 0 10 14"><path d="M2.5 1.5L8 7L2.5 12.5" stroke="#c9d1d9" fill="none" stroke-width="1.4" stroke-linecap="round" stroke-linejoin="round"/></svg><div class="a t " style="left:229px;top:1032.58px;font-size:13.9px;line-height:16.68px;color:#e6edf3;font-weight:bold;letter-spacing:-0.3px">TIMELINE</div><div class="a" style="left:579px;top:167px;width:671px;height:43.5px;background:#010409;"></div><div class="a" style="left:579px;top:209.5px;width:671px;height:1px;background:#30363d;"></div><div class="a" style="left:728px;top:167px;width:1px;height:43px;background:#30363d;"></div><svg class="a" style="left:596px;top:181px;" width="16" height="16" viewBox="0 0 16 16"><path d="M6.8 0.5H9.2L9.6 2.6L11.2 3.3L13 2.1L14.7 3.8L13.5 5.6L14.2 7.2L16.3 7.6V10L14.2 10.4L13.5 12L14.7 13.8L13 15.5L11.2 14.3L9.6 15L9.2 17.1H6.8L6.4 15L4.8 14.3L3 15.5L1.3 13.8L2.5 12L1.8 10.4L-0.3 10V7.6L1.8 7.2L2.5 5.6L1.3 3.8L3 2.1L4.8 3.3L6.4 2.6Z" transform="translate(0.5 -0.5) scale(0.95)" fill="#8ea4b0"/><circle cx="8.3" cy="7.9" r="2.6" fill="#010409"/></svg><div class="a t " style="left:619px;top:180.22px;font-size:16.1px;line-height:19.32px;color:#d29922;">.env</div><div class="a t " style="left:679px;top:180.59px;font-size:15.5px;line-height:18.60px;color:#d29922;">M</div><div class="a" style="left:729px;top:167px;width:154px;height:43.5px;background:#0d1117;"></div><div class="a" style="left:729px;top:167px;width:154px;height:2px;background:#f78166;"></div><div class="a" style="left:883px;top:167px;width:1px;height:43px;background:#30363d;"></div><div class="a t " style="left:746px;top:181.45px;font-size:12.5px;line-height:15.00px;color:#519aba;font-weight:bold;letter-spacing:-0.5px">TS</div><div class="a t " style="left:769.5px;top:180.22px;font-size:16.1px;line-height:19.32px;color:#d29922;">books.ts</div><div class="a t " style="left:835px;top:180.59px;font-size:15.5px;line-height:18.60px;color:#d29922;">M</div><svg class="a" style="left:859px;top:182px;" width="14" height="14" viewBox="0 0 14 14"><path d="M1.5 1.5L12.5 12.5M12.5 1.5L1.5 12.5" stroke="#e6edf3" stroke-width="1.7"/></svg><svg class="a" style="left:1146px;top:178px;" width="22" height="22" viewBox="0 0 22 22"><path d="M4 4V18M4 4A2 2 0 1 0 4 0.1M18 18V8C18 6 16 5 14 5H9M11 2L8 5L11 8" stroke="#c9d1d9" fill="none" stroke-width="1.4" stroke-linecap="round" stroke-linejoin="round"/><circle cx="4" cy="18" r="2" stroke="#c9d1d9" fill="none" stroke-width="1.4" stroke-linecap="round" stroke-linejoin="round"/><circle cx="18" cy="18" r="2" stroke="#c9d1d9" fill="none" stroke-width="1.4" stroke-linecap="round" stroke-linejoin="round"/><circle cx="4" cy="3" r="2" stroke="#c9d1d9" fill="none" stroke-width="1.4" stroke-linecap="round" stroke-linejoin="round"/></svg><svg class="a" style="left:1180px;top:179px;" width="20" height="20" viewBox="0 0 20 20"><rect x="1.5" y="1.5" width="17" height="17" rx="1.5" stroke="#c9d1d9" fill="none" stroke-width="1.4" stroke-linecap="round" stroke-linejoin="round"/><path d="M10 1.5V18.5" stroke="#c9d1d9" stroke-width="1.4"/></svg><div class="a" style="left:1214px;top:188px;width:3px;height:3px;background:#c9d1d9;border-radius:50%"></div><div class="a" style="left:1221px;top:188px;width:3px;height:3px;background:#c9d1d9;border-radius:50%"></div><div class="a" style="left:1228px;top:188px;width:3px;height:3px;background:#c9d1d9;border-radius:50%"></div><div class="a t " style="left:579.5px;top:216.72px;font-size:16.1px;line-height:19.32px;color:#9198a1;">server</div><svg class="a" style="left:629px;top:219px;" width="8" height="12" viewBox="0 0 8 12"><path d="M1.5 1L6.5 6L1.5 11" stroke="#9198a1" fill="none" stroke-width="1.4" stroke-linecap="round" stroke-linejoin="round"/></svg><div class="a t " style="left:642px;top:216.72px;font-size:16.1px;line-height:19.32px;color:#9198a1;">src</div><svg class="a" style="left:668px;top:219px;" width="8" height="12" viewBox="0 0 8 12"><path d="M1.5 1L6.5 6L1.5 11" stroke="#9198a1" fill="none" stroke-width="1.4" stroke-linecap="round" stroke-linejoin="round"/></svg><div class="a t " style="left:682px;top:216.72px;font-size:16.1px;line-height:19.32px;color:#9198a1;">controllers</div><svg class="a" style="left:765px;top:219px;" width="8" height="12" viewBox="0 0 8 12"><path d="M1.5 1L6.5 6L1.5 11" stroke="#9198a1" fill="none" stroke-width="1.4" stroke-linecap="round" stroke-linejoin="round"/></svg><div class="a t " style="left:782px;top:217.45px;font-size:12.5px;line-height:15.00px;color:#519aba;font-weight:bold;letter-spacing:-0.5px">TS</div><div class="a t " style="left:806px;top:216.72px;font-size:16.1px;line-height:19.32px;color:#9198a1;">books.ts</div><svg class="a" style="left:872px;top:219px;" width="8" height="12" viewBox="0 0 8 12"><path d="M1.5 1L6.5 6L1.5 11" stroke="#9198a1" fill="none" stroke-width="1.4" stroke-linecap="round" stroke-linejoin="round"/></svg><svg class="a" style="left:885px;top:217px;" width="19" height="17" viewBox="0 0 19 17"><path d="M2 4L6 1L9 4L6 7Z M9 12L13 9L16 12L13 15Z M6 7V12H9 M9 4H13V9" fill="none" stroke="#ee9d28" stroke-width="1.6"/></svg><div class="a t " style="left:909px;top:216.72px;font-size:16.1px;line-height:19.32px;color:#9198a1;">BookController</div><svg class="a" style="left:1022px;top:219px;" width="8" height="12" viewBox="0 0 8 12"><path d="M1.5 1L6.5 6L1.5 11" stroke="#9198a1" fill="none" stroke-width="1.4" stroke-linecap="round" stroke-linejoin="round"/></svg><div class="a" style="left:1027px;top:210.5px;width:223px;height:27.5px;background:#010409;"></div><div class="a" style="left:579px;top:238px;width:591px;height:540px;overflow:hidden"><div class="a" style="left:85.5px;top:304.375px;width:505.5px;height:23.75px;background:#161b22;"></div><div class="a" style="left:85.5px;top:304.375px;width:505.5px;height:1px;background:#1e232b;"></div><div class="a" style="left:85.5px;top:327.125px;width:505.5px;height:1px;background:#1e232b;"></div><div class="a" style="left:85.5px;top:19.375px;width:1px;height:522.5px;background:#21262d;"></div><div class="a" style="left:124.0px;top:233.125px;width:1px;height:308.75px;background:#21262d;"></div><div class="a" style="left:162.5px;top:256.875px;width:1px;height:213.75px;background:#21262d;"></div><div class="a" style="left:201.0px;top:280.625px;width:1px;height:166.25px;background:#21262d;"></div><div class="a" style="left:239.5px;top:304.375px;width:1px;height:118.75px;background:#6e7681;"></div><div class="a" style="left:278.0px;top:351.875px;width:1px;height:47.5px;background:#21262d;"></div><div class="a t m" style="left:0px;width:53px;text-align:right;top:22.05px;font-size:16px;line-height:21px;color:#6e7681">95</div><div class="a t m" style="left:0px;width:53px;text-align:right;top:45.80px;font-size:16px;line-height:21px;color:#6e7681">96</div><div class="a t m" style="left:0px;width:53px;text-align:right;top:69.55px;font-size:16px;line-height:21px;color:#6e7681">97</div><div class="a t m" style="left:0px;width:53px;text-align:right;top:93.30px;font-size:16px;line-height:21px;color:#6e7681">98</div><div class="a t m" style="left:0px;width:53px;text-align:right;top:117.05px;font-size:16px;line-height:21px;color:#6e7681">99</div><div class="a t m" style="left:0px;width:53px;text-align:right;top:140.80px;font-size:16px;line-height:21px;color:#6e7681">100</div><div class="a t m" style="left:0px;width:53px;text-align:right;top:164.55px;font-size:16px;line-height:21px;color:#6e7681">101</div><div class="a t m" style="left:0px;width:53px;text-align:right;top:188.30px;font-size:16px;line-height:21px;color:#6e7681">102</div><div class="a t m" style="left:0px;width:53px;text-align:right;top:212.05px;font-size:16px;line-height:21px;color:#6e7681">103</div><div class="a t m" style="left:0px;width:53px;text-align:right;top:235.80px;font-size:16px;line-height:21px;color:#6e7681">104</div><div class="a t m" style="left:0px;width:53px;text-align:right;top:259.55px;font-size:16px;line-height:21px;color:#6e7681">105</div><div class="a t m" style="left:0px;width:53px;text-align:right;top:283.30px;font-size:16px;line-height:21px;color:#6e7681">106</div><div class="a t m" style="left:0px;width:53px;text-align:right;top:307.05px;font-size:16px;line-height:21px;color:#e6edf3">107</div><div class="a t m" style="left:0px;width:53px;text-align:right;top:330.80px;font-size:16px;line-height:21px;color:#6e7681">108</div><div class="a t m" style="left:0px;width:53px;text-align:right;top:354.55px;font-size:16px;line-height:21px;color:#6e7681">109</div><div class="a t m" style="left:0px;width:53px;text-align:right;top:378.30px;font-size:16px;line-height:21px;color:#6e7681">110</div><div class="a t m" style="left:0px;width:53px;text-align:right;top:402.05px;font-size:16px;line-height:21px;color:#6e7681">111</div><div class="a t m" style="left:0px;width:53px;text-align:right;top:425.80px;font-size:16px;line-height:21px;color:#6e7681">112</div><div class="a t m" style="left:0px;width:53px;text-align:right;top:449.55px;font-size:16px;line-height:21px;color:#6e7681">113</div><div class="a t m" style="left:0px;width:53px;text-align:right;top:473.30px;font-size:16px;line-height:21px;color:#6e7681">114</div><div class="a t m" style="left:0px;width:53px;text-align:right;top:497.05px;font-size:16px;line-height:21px;color:#6e7681">115</div><div class="a t m" style="left:0px;width:53px;text-align:right;top:520.80px;font-size:16px;line-height:21px;color:#6e7681">116</div><div class="a" style="left:59px;top:41px;width:4px;height:218px;background:repeating-linear-gradient(135deg,#6f5616 0 2px,transparent 2px 4px);"></div><div class="a" style="left:59px;top:278px;width:4px;height:112px;background:repeating-linear-gradient(135deg,#6f5616 0 2px,transparent 2px 4px);"></div><div class="a" style="left:59px;top:452px;width:4px;height:67px;background:repeating-linear-gradient(135deg,#6f5616 0 2px,transparent 2px 4px);"></div><div class="a" style="left:59px;top:390px;width:4px;height:23px;background:#1f6a2c;"></div><svg class="a" style="left:59px;top:442px;" width="6" height="10" viewBox="0 0 6 10"><path d="M0 0L6 5L0 10Z" fill="#da3633" opacity=".8"/></svg><div class="a" style="left:249.125px;top:210.375px;width:96.25px;height:21.75px;background:#7b5e2a;"></div><div class="a" style="left:249.125px;top:210.375px;width:0px;height:0px;background:#000;"></div><div class="a" style="left:325.125px;top:281.5px;width:10.625px;height:22px;background:transparent;border:1px solid #3fb950"></div><div class="a" style="left:238.5px;top:424.0px;width:10.625px;height:22px;background:transparent;border:1px solid #3fb950"></div><div class="a t m" style="left:124.00px;top:45.80px;font-size:16px;line-height:21px;color:#8b949e">//             $or: [</div><div class="a t m" style="left:124.00px;top:69.55px;font-size:16px;line-height:21px;color:#8b949e">//                 {title: {$regex: new RegExp(qu</div><div class="a t m" style="left:124.00px;top:93.30px;font-size:16px;line-height:21px;color:#8b949e">//                 {'authors.name': {$regex: new</div><div class="a t m" style="left:124.00px;top:117.05px;font-size:16px;line-height:21px;color:#8b949e">//             ]</div><div class="a t m" style="left:124.00px;top:140.80px;font-size:16px;line-height:21px;color:#8b949e">//         }).limit(25).toArray();</div><div class="a t m" style="left:124.00px;top:164.55px;font-size:16px;line-height:21px;color:#8b949e">//     return books;</div><div class="a t m" style="left:124.00px;top:188.30px;font-size:16px;line-height:21px;color:#8b949e">// }</div><div class="a t m" style="left:124.00px;top:212.05px;font-size:16px;line-height:21px;color:#ff7b72">public async </div><div class="a t m" style="left:249.12px;top:212.05px;font-size:16px;line-height:21px;color:#d2a8ff">searchBooks</div><div class="a t m" style="left:355.00px;top:212.05px;font-size:16px;line-height:21px;color:#56d364">(</div><div class="a t m" style="left:364.62px;top:212.05px;font-size:16px;line-height:21px;color:#ffa657">query</div><div class="a t m" style="left:412.75px;top:212.05px;font-size:16px;line-height:21px;color:#e6edf3">: </div><div class="a t m" style="left:432.00px;top:212.05px;font-size:16px;line-height:21px;color:#79c0ff">string</div><div class="a t m" style="left:489.75px;top:212.05px;font-size:16px;line-height:21px;color:#56d364">)</div><div class="a t m" style="left:499.38px;top:212.05px;font-size:16px;line-height:21px;color:#e6edf3">: </div><div class="a t m" style="left:518.62px;top:212.05px;font-size:16px;line-height:21px;color:#79c0ff">Promise</div><div class="a t m" style="left:586.00px;top:212.05px;font-size:16px;line-height:21px;color:#ffa657">&lt;</div><div class="a t m" style="left:162.50px;top:235.80px;font-size:16px;line-height:21px;color:#ff7b72">const </div><div class="a t m" style="left:220.25px;top:235.80px;font-size:16px;line-height:21px;color:#79c0ff">aggregationPipeline</div><div class="a t m" style="left:412.75px;top:235.80px;font-size:16px;line-height:21px;color:#ff7b72">=</div><div class="a t m" style="left:432.00px;top:235.80px;font-size:16px;line-height:21px;color:#e3b341">[</div><div class="a t m" style="left:201.00px;top:259.55px;font-size:16px;line-height:21px;color:#ffa198">{</div><div class="a t m" style="left:239.50px;top:283.30px;font-size:16px;line-height:21px;color:#e6edf3">$search: </div><div class="a t m" style="left:326.12px;top:283.30px;font-size:16px;line-height:21px;color:#ff9bce">{</div><div class="a t m" style="left:278.00px;top:307.05px;font-size:16px;line-height:21px;color:#e6edf3">index: </div><div class="a t m" style="left:345.38px;top:307.05px;font-size:16px;line-height:21px;color:#a5d6ff">'fulltextsearch'</div><div class="a t m" style="left:499.38px;top:307.05px;font-size:16px;line-height:21px;color:#e6edf3">,</div><div class="a t m" style="left:278.00px;top:330.80px;font-size:16px;line-height:21px;color:#e6edf3">text: </div><div class="a t m" style="left:335.75px;top:330.80px;font-size:16px;line-height:21px;color:#d2a8ff">{</div><div class="a t m" style="left:316.50px;top:354.55px;font-size:16px;line-height:21px;color:#e6edf3">query,</div><div class="a t m" style="left:316.50px;top:378.30px;font-size:16px;line-height:21px;color:#e6edf3">path: </div><div class="a t m" style="left:374.25px;top:378.30px;font-size:16px;line-height:21px;color:#79c0ff">[</div><div class="a t m" style="left:383.88px;top:378.30px;font-size:16px;line-height:21px;color:#a5d6ff">'title'</div><div class="a t m" style="left:451.25px;top:378.30px;font-size:16px;line-height:21px;color:#e6edf3">, </div><div class="a t m" style="left:470.50px;top:378.30px;font-size:16px;line-height:21px;color:#a5d6ff">'authors.name</div><div class="a t m" style="left:278.00px;top:402.05px;font-size:16px;line-height:21px;color:#d2a8ff">}</div><div class="a t m" style="left:239.50px;top:425.80px;font-size:16px;line-height:21px;color:#ff9bce">}</div><div class="a t m" style="left:201.00px;top:449.55px;font-size:16px;line-height:21px;color:#ffa198">}</div><div class="a t m" style="left:162.50px;top:473.30px;font-size:16px;line-height:21px;color:#e3b341">]</div><div class="a t m" style="left:172.12px;top:473.30px;font-size:16px;line-height:21px;color:#e6edf3">;</div><div class="a t m" style="left:162.50px;top:497.05px;font-size:16px;line-height:21px;color:#ff7b72">const </div><div class="a t m" style="left:220.25px;top:497.05px;font-size:16px;line-height:21px;color:#79c0ff">books</div><div class="a t m" style="left:278.00px;top:497.05px;font-size:16px;line-height:21px;color:#ff7b72">=</div><div class="a t m" style="left:297.25px;top:497.05px;font-size:16px;line-height:21px;color:#ff7b72">await </div><div class="a t m" style="left:355.00px;top:497.05px;font-size:16px;line-height:21px;color:#79c0ff">collections</div><div class="a t m" style="left:460.88px;top:497.05px;font-size:16px;line-height:21px;color:#e6edf3">?.books?.</div><div class="a t m" style="left:547.50px;top:497.05px;font-size:16px;line-height:21px;color:#d2a8ff">aggre</div><div class="a t m" style="left:162.50px;top:520.80px;font-size:16px;line-height:21px;color:#ff7b72">return </div><div class="a t m" style="left:229.88px;top:520.80px;font-size:16px;line-height:21px;color:#79c0ff">books</div><div class="a t m" style="left:278.00px;top:520.80px;font-size:16px;line-height:21px;color:#e6edf3">;</div><div class="a" style="left:344.375px;top:305.25px;width:2px;height:22px;background:#58a6ff;"></div><div class="a" style="left:85.5px;top:528px;width:240.5px;height:12px;background:rgba(110,118,129,0.25);"></div></div><div class="a" style="left:579px;top:238px;width:591px;height:24.5px;background:#0d1117;"></div><div class="a t m" style="left:579px;width:53px;text-align:right;top:240.70px;font-size:16px;line-height:21px;color:#6e7681">7</div><div class="a" style="left:579px;top:262.5px;width:591px;height:3px;background:linear-gradient(#0008,transparent);"></div><div class="a" style="left:631px;top:238px;width:521px;height:40px;background:#161b22;box-shadow:0 0 10px 2px rgba(0,0,0,.7);border-bottom-left-radius:6px;border-bottom-right-radius:6px"></div><div class="a" style="left:629px;top:238px;width:3px;height:40px;background:#3d444d;"></div><svg class="a" style="left:638px;top:250px;" width="12" height="16" viewBox="0 0 12 16"><path d="M3 2L9 8L3 14" stroke="#8b949e" fill="none" stroke-width="1.4" stroke-linecap="round" stroke-linejoin="round"/></svg><div class="a" style="left:655px;top:243px;width:278px;height:29px;background:#0d1117;border:1px solid #30363d;border-radius:6px"></div><div class="a t " style="left:663px;top:248.72px;font-size:16.1px;line-height:19.32px;color:#e6edf3;">searchbook</div><div class="a t " style="left:856px;top:248.90px;font-size:15px;line-height:18.00px;color:#c9d1d9;">Aa</div><div class="a t " style="left:881px;top:248.21px;font-size:14.5px;line-height:17.40px;color:#c9d1d9;">ab</div><div class="a" style="left:881px;top:266px;width:22px;height:1.5px;background:#c9d1d9;"></div><div class="a" style="left:880px;top:262px;width:1.5px;height:5px;background:#c9d1d9;"></div><div class="a" style="left:902px;top:262px;width:1.5px;height:5px;background:#c9d1d9;"></div><div class="a" style="left:911px;top:259px;width:5px;height:5px;background:#c9d1d9;"></div><div class="a t " style="left:916px;top:245.28px;font-size:16px;line-height:19.20px;color:#c9d1d9;font-weight:bold">*</div><div class="a t " style="left:940px;top:249.22px;font-size:16.1px;line-height:19.32px;color:#e6edf3;">2 of 2</div><svg class="a" style="left:1033px;top:248px;" width="18" height="20" viewBox="0 0 18 20"><path d="M9 18V2M2 9L9 2L16 9" stroke="#8b949e" fill="none" stroke-width="1.4" stroke-linecap="round" stroke-linejoin="round"/></svg><svg class="a" style="left:1064px;top:248px;" width="18" height="20" viewBox="0 0 18 20"><path d="M9 2V18M2 11L9 18L16 11" stroke="#8b949e" fill="none" stroke-width="1.4" stroke-linecap="round" stroke-linejoin="round"/></svg><svg class="a" style="left:1094px;top:250px;" width="20" height="16" viewBox="0 0 20 16"><path d="M1 2.5H15M1 8H19M1 13.5H13" stroke="#c9d1d9" stroke-width="1.5"/></svg><svg class="a" style="left:1127px;top:251px;" width="14" height="14" viewBox="0 0 14 14"><path d="M1 1L13 13M13 1L1 13" stroke="#8b949e" stroke-width="1.3"/></svg><svg class="a" style="left:1170px;top:238px;" width="62" height="300" viewBox="0 0 62 300"><rect x="8" y="117.54" width="54" height="2.4" fill="#9e6a03" opacity=".8"/><rect x="8" y="137.84" width="54" height="2.4" fill="#9e6a03" opacity=".8"/><g opacity=".4"><rect x="8.00" y="0.30" width="7.20" height="1.3" fill="#ff7b72"/><rect x="16.40" y="0.30" width="43.20" height="1.3" fill="#c9d1d9"/><rect x="60.80" y="0.30" width="1.20" height="1.3" fill="#ff7b72"/><rect x="8.00" y="2.33" width="7.20" height="1.3" fill="#ff7b72"/><rect x="16.40" y="2.33" width="12.00" height="1.3" fill="#c9d1d9"/><rect x="29.60" y="2.33" width="4.80" height="1.3" fill="#ff7b72"/><rect x="35.60" y="2.33" width="16.80" height="1.3" fill="#79c0ff"/><rect x="8.00" y="4.36" width="7.20" height="1.3" fill="#ff7b72"/><rect x="16.40" y="4.36" width="14.40" height="1.3" fill="#c9d1d9"/><rect x="32.00" y="4.36" width="4.80" height="1.3" fill="#ff7b72"/><rect x="38.00" y="4.36" width="16.80" height="1.3" fill="#79c0ff"/><rect x="8.00" y="6.39" width="52.80" height="1.3" fill="#8b949e"/><rect x="8.00" y="8.42" width="7.20" height="1.3" fill="#ff7b72"/><rect x="16.40" y="8.42" width="19.20" height="1.3" fill="#c9d1d9"/><rect x="36.80" y="8.42" width="4.80" height="1.3" fill="#ff7b72"/><rect x="42.80" y="8.42" width="19.20" height="1.3" fill="#79c0ff"/><rect x="8.00" y="12.48" width="7.20" height="1.3" fill="#ff7b72"/><rect x="16.40" y="12.48" width="16.80" height="1.3" fill="#c9d1d9"/><rect x="34.40" y="12.48" width="2.40" height="1.3" fill="#c9d1d9"/><rect x="12.80" y="14.51" width="6.00" height="1.3" fill="#ff7b72"/><rect x="20.00" y="14.51" width="3.60" height="1.3" fill="#c9d1d9"/><rect x="17.60" y="16.54" width="19.20" height="1.3" fill="#c9d1d9"/><rect x="38.00" y="16.54" width="24.00" height="1.3" fill="#79c0ff"/><rect x="17.60" y="18.57" width="19.20" height="1.3" fill="#c9d1d9"/><rect x="38.00" y="18.57" width="24.00" height="1.3" fill="#79c0ff"/><rect x="17.60" y="20.60" width="19.20" height="1.3" fill="#c9d1d9"/><rect x="38.00" y="20.60" width="24.00" height="1.3" fill="#79c0ff"/><rect x="17.60" y="22.63" width="12.00" height="1.3" fill="#c9d1d9"/><rect x="30.80" y="22.63" width="14.40" height="1.3" fill="#79c0ff"/><rect x="17.60" y="24.66" width="14.40" height="1.3" fill="#c9d1d9"/><rect x="33.20" y="24.66" width="28.80" height="1.3" fill="#79c0ff"/><rect x="17.60" y="26.69" width="12.00" height="1.3" fill="#c9d1d9"/><rect x="30.80" y="26.69" width="19.20" height="1.3" fill="#79c0ff"/><rect x="51.20" y="26.69" width="2.40" height="1.3" fill="#c9d1d9"/><rect x="17.60" y="28.72" width="12.00" height="1.3" fill="#c9d1d9"/><rect x="30.80" y="28.72" width="31.20" height="1.3" fill="#79c0ff"/><rect x="17.60" y="30.75" width="16.80" height="1.3" fill="#c9d1d9"/><rect x="35.60" y="30.75" width="21.60" height="1.3" fill="#79c0ff"/><rect x="12.80" y="32.78" width="2.40" height="1.3" fill="#c9d1d9"/><rect x="12.80" y="36.84" width="9.60" height="1.3" fill="#c9d1d9"/><rect x="23.60" y="36.84" width="2.40" height="1.3" fill="#c9d1d9"/><rect x="17.60" y="38.87" width="9.60" height="1.3" fill="#c9d1d9"/><rect x="28.40" y="38.87" width="12.00" height="1.3" fill="#79c0ff"/><rect x="17.60" y="40.90" width="9.60" height="1.3" fill="#c9d1d9"/><rect x="28.40" y="40.90" width="12.00" height="1.3" fill="#79c0ff"/><rect x="17.60" y="42.93" width="9.60" height="1.3" fill="#c9d1d9"/><rect x="28.40" y="42.93" width="12.00" height="1.3" fill="#79c0ff"/><rect x="12.80" y="44.96" width="2.40" height="1.3" fill="#c9d1d9"/><rect x="12.80" y="49.02" width="14.40" height="1.3" fill="#ff7b72"/><rect x="28.40" y="49.02" width="12.00" height="1.3" fill="#d2a8ff"/><rect x="41.60" y="49.02" width="9.60" height="1.3" fill="#ffa657"/><rect x="52.40" y="49.02" width="9.60" height="1.3" fill="#c9d1d9"/><rect x="17.60" y="51.05" width="2.40" height="1.3" fill="#ff7b72"/><rect x="21.20" y="51.05" width="12.00" height="1.3" fill="#c9d1d9"/><rect x="34.40" y="51.05" width="4.80" height="1.3" fill="#79c0ff"/><rect x="22.40" y="53.08" width="6.00" height="1.3" fill="#ffa657"/><rect x="29.60" y="53.08" width="3.60" height="1.3" fill="#79c0ff"/><rect x="17.60" y="55.11" width="1.20" height="1.3" fill="#c9d1d9"/><rect x="17.60" y="59.17" width="6.00" height="1.3" fill="#ff7b72"/><rect x="24.80" y="59.17" width="12.00" height="1.3" fill="#79c0ff"/><rect x="38.00" y="59.17" width="3.60" height="1.3" fill="#c9d1d9"/><rect x="42.80" y="59.17" width="19.20" height="1.3" fill="#79c0ff"/><rect x="17.60" y="61.20" width="6.00" height="1.3" fill="#ff7b72"/><rect x="24.80" y="61.20" width="7.20" height="1.3" fill="#79c0ff"/><rect x="33.20" y="61.20" width="3.60" height="1.3" fill="#c9d1d9"/><rect x="38.00" y="61.20" width="7.20" height="1.3" fill="#ff7b72"/><rect x="46.40" y="61.20" width="12.00" height="1.3" fill="#79c0ff"/><rect x="59.60" y="61.20" width="2.40" height="1.3" fill="#d2a8ff"/><rect x="17.60" y="65.26" width="7.20" height="1.3" fill="#ff7b72"/><rect x="26.00" y="65.26" width="7.20" height="1.3" fill="#79c0ff"/><rect x="12.80" y="67.29" width="1.20" height="1.3" fill="#c9d1d9"/><rect x="12.80" y="71.35" width="49.20" height="1.3" fill="#8b949e"/><rect x="17.60" y="73.38" width="4.80" height="1.3" fill="#8b949e"/><rect x="17.60" y="75.41" width="14.40" height="1.3" fill="#8b949e"/><rect x="17.60" y="77.44" width="44.40" height="1.3" fill="#8b949e"/><rect x="17.60" y="79.47" width="44.40" height="1.3" fill="#8b949e"/><rect x="17.60" y="81.50" width="2.40" height="1.3" fill="#8b949e"/><rect x="17.60" y="83.53" width="44.40" height="1.3" fill="#8b949e"/><rect x="17.60" y="85.56" width="14.40" height="1.3" fill="#8b949e"/><rect x="17.60" y="89.62" width="24.00" height="1.3" fill="#8b949e"/><rect x="22.40" y="91.65" width="9.60" height="1.3" fill="#8b949e"/><rect x="17.60" y="93.68" width="2.40" height="1.3" fill="#8b949e"/><rect x="17.60" y="97.74" width="18.00" height="1.3" fill="#8b949e"/><rect x="12.80" y="99.77" width="2.40" height="1.3" fill="#8b949e"/><rect x="12.80" y="101.80" width="14.40" height="1.3" fill="#ff7b72"/><rect x="28.40" y="101.80" width="9.60" height="1.3" fill="#d2a8ff"/><rect x="39.20" y="101.80" width="14.40" height="1.3" fill="#ffa657"/><rect x="54.80" y="101.80" width="7.20" height="1.3" fill="#c9d1d9"/><rect x="17.60" y="103.83" width="4.80" height="1.3" fill="#8b949e"/><rect x="17.60" y="105.86" width="16.80" height="1.3" fill="#8b949e"/><rect x="17.60" y="107.89" width="6.00" height="1.3" fill="#ff7b72"/><rect x="24.80" y="107.89" width="7.20" height="1.3" fill="#79c0ff"/><rect x="33.20" y="107.89" width="3.60" height="1.3" fill="#c9d1d9"/><rect x="38.00" y="107.89" width="7.20" height="1.3" fill="#ff7b72"/><rect x="46.40" y="107.89" width="12.00" height="1.3" fill="#79c0ff"/><rect x="59.60" y="107.89" width="2.40" height="1.3" fill="#d2a8ff"/><rect x="17.60" y="111.95" width="7.20" height="1.3" fill="#ff7b72"/><rect x="26.00" y="111.95" width="7.20" height="1.3" fill="#79c0ff"/><rect x="12.80" y="113.98" width="1.20" height="1.3" fill="#c9d1d9"/><rect x="12.80" y="118.04" width="49.20" height="1.3" fill="#8b949e"/><rect x="17.60" y="120.07" width="44.40" height="1.3" fill="#8b949e"/><rect x="22.40" y="122.10" width="2.40" height="1.3" fill="#8b949e"/><rect x="27.20" y="124.13" width="4.80" height="1.3" fill="#8b949e"/><rect x="32.00" y="126.16" width="30.00" height="1.3" fill="#8b949e"/><rect x="32.00" y="128.19" width="30.00" height="1.3" fill="#8b949e"/><rect x="27.20" y="130.22" width="2.40" height="1.3" fill="#8b949e"/><rect x="22.40" y="132.25" width="26.40" height="1.3" fill="#8b949e"/><rect x="17.60" y="134.28" width="18.00" height="1.3" fill="#8b949e"/><rect x="12.80" y="136.31" width="4.80" height="1.3" fill="#8b949e"/><rect x="12.80" y="138.34" width="14.40" height="1.3" fill="#ff7b72"/><rect x="28.40" y="138.34" width="12.00" height="1.3" fill="#d2a8ff"/><rect x="41.60" y="138.34" width="12.00" height="1.3" fill="#ffa657"/><rect x="54.80" y="138.34" width="7.20" height="1.3" fill="#c9d1d9"/><rect x="17.60" y="140.37" width="6.00" height="1.3" fill="#ff7b72"/><rect x="24.80" y="140.37" width="24.00" height="1.3" fill="#79c0ff"/><rect x="50.00" y="140.37" width="4.80" height="1.3" fill="#c9d1d9"/><rect x="22.40" y="142.40" width="1.20" height="1.3" fill="#c9d1d9"/><rect x="27.20" y="144.43" width="10.80" height="1.3" fill="#c9d1d9"/><rect x="39.20" y="144.43" width="1.20" height="1.3" fill="#c9d1d9"/><rect x="32.00" y="146.46" width="8.40" height="1.3" fill="#c9d1d9"/><rect x="41.60" y="146.46" width="19.20" height="1.3" fill="#79c0ff"/><rect x="32.00" y="148.49" width="7.20" height="1.3" fill="#c9d1d9"/><rect x="36.80" y="150.52" width="7.20" height="1.3" fill="#c9d1d9"/><rect x="36.80" y="152.55" width="7.20" height="1.3" fill="#c9d1d9"/><rect x="45.20" y="152.55" width="16.80" height="1.3" fill="#79c0ff"/><rect x="32.00" y="154.58" width="1.20" height="1.3" fill="#c9d1d9"/><rect x="27.20" y="156.61" width="1.20" height="1.3" fill="#c9d1d9"/><rect x="22.40" y="158.64" width="1.20" height="1.3" fill="#c9d1d9"/><rect x="17.60" y="160.67" width="2.40" height="1.3" fill="#c9d1d9"/><rect x="17.60" y="162.70" width="6.00" height="1.3" fill="#ff7b72"/><rect x="24.80" y="162.70" width="7.20" height="1.3" fill="#79c0ff"/><rect x="33.20" y="162.70" width="3.60" height="1.3" fill="#c9d1d9"/><rect x="38.00" y="162.70" width="7.20" height="1.3" fill="#ff7b72"/><rect x="46.40" y="162.70" width="14.40" height="1.3" fill="#79c0ff"/><rect x="17.60" y="164.73" width="7.20" height="1.3" fill="#ff7b72"/><rect x="26.00" y="164.73" width="7.20" height="1.3" fill="#79c0ff"/><rect x="12.80" y="166.76" width="1.20" height="1.3" fill="#c9d1d9"/><rect x="12.80" y="170.82" width="14.40" height="1.3" fill="#ff7b72"/><rect x="28.40" y="170.82" width="16.80" height="1.3" fill="#d2a8ff"/><rect x="46.40" y="170.82" width="12.00" height="1.3" fill="#ffa657"/><rect x="59.60" y="170.82" width="2.40" height="1.3" fill="#c9d1d9"/><rect x="17.60" y="172.85" width="6.00" height="1.3" fill="#ff7b72"/><rect x="24.80" y="172.85" width="9.60" height="1.3" fill="#79c0ff"/><rect x="35.60" y="172.85" width="3.60" height="1.3" fill="#c9d1d9"/><rect x="40.40" y="172.85" width="7.20" height="1.3" fill="#ff7b72"/><rect x="48.80" y="172.85" width="13.20" height="1.3" fill="#79c0ff"/><rect x="17.60" y="176.91" width="2.40" height="1.3" fill="#ff7b72"/><rect x="21.20" y="176.91" width="14.40" height="1.3" fill="#c9d1d9"/><rect x="36.80" y="176.91" width="12.00" height="1.3" fill="#79c0ff"/><rect x="22.40" y="178.94" width="7.20" height="1.3" fill="#ff7b72"/><rect x="30.80" y="178.94" width="3.60" height="1.3" fill="#ff7b72"/><rect x="35.60" y="178.94" width="9.60" height="1.3" fill="#79c0ff"/><rect x="46.40" y="178.94" width="9.60" height="1.3" fill="#c9d1d9"/><rect x="57.20" y="178.94" width="4.80" height="1.3" fill="#79c0ff"/><rect x="17.60" y="180.97" width="1.20" height="1.3" fill="#c9d1d9"/><rect x="17.60" y="185.03" width="7.20" height="1.3" fill="#ff7b72"/><rect x="26.00" y="185.03" width="7.20" height="1.3" fill="#79c0ff"/><rect x="12.80" y="187.06" width="1.20" height="1.3" fill="#c9d1d9"/><rect x="12.80" y="191.12" width="14.40" height="1.3" fill="#ff7b72"/><rect x="28.40" y="191.12" width="19.20" height="1.3" fill="#d2a8ff"/><rect x="48.80" y="191.12" width="9.60" height="1.3" fill="#ffa657"/><rect x="59.60" y="191.12" width="2.40" height="1.3" fill="#c9d1d9"/><rect x="17.60" y="193.15" width="6.00" height="1.3" fill="#ff7b72"/><rect x="24.80" y="193.15" width="9.60" height="1.3" fill="#79c0ff"/><rect x="35.60" y="193.15" width="3.60" height="1.3" fill="#c9d1d9"/><rect x="40.40" y="193.15" width="7.20" height="1.3" fill="#ff7b72"/><rect x="48.80" y="193.15" width="13.20" height="1.3" fill="#79c0ff"/><rect x="17.60" y="197.21" width="2.40" height="1.3" fill="#ff7b72"/><rect x="21.20" y="197.21" width="16.80" height="1.3" fill="#c9d1d9"/><rect x="39.20" y="197.21" width="2.40" height="1.3" fill="#ff7b72"/><rect x="42.80" y="197.21" width="2.40" height="1.3" fill="#79c0ff"/><rect x="46.40" y="197.21" width="2.40" height="1.3" fill="#c9d1d9"/><rect x="22.40" y="199.24" width="7.20" height="1.3" fill="#ff7b72"/><rect x="30.80" y="199.24" width="3.60" height="1.3" fill="#ff7b72"/><rect x="35.60" y="199.24" width="9.60" height="1.3" fill="#79c0ff"/><rect x="46.40" y="199.24" width="9.60" height="1.3" fill="#c9d1d9"/><rect x="57.20" y="199.24" width="4.80" height="1.3" fill="#79c0ff"/><rect x="17.60" y="201.27" width="1.20" height="1.3" fill="#c9d1d9"/><rect x="17.60" y="205.33" width="7.20" height="1.3" fill="#ff7b72"/><rect x="26.00" y="205.33" width="7.20" height="1.3" fill="#79c0ff"/><rect x="12.80" y="207.36" width="1.20" height="1.3" fill="#c9d1d9"/><rect x="12.80" y="211.42" width="14.40" height="1.3" fill="#ff7b72"/><rect x="28.40" y="211.42" width="16.80" height="1.3" fill="#d2a8ff"/><rect x="46.40" y="211.42" width="12.00" height="1.3" fill="#ffa657"/><rect x="59.60" y="211.42" width="2.40" height="1.3" fill="#c9d1d9"/><rect x="17.60" y="213.45" width="6.00" height="1.3" fill="#ff7b72"/><rect x="24.80" y="213.45" width="9.60" height="1.3" fill="#79c0ff"/><rect x="35.60" y="213.45" width="3.60" height="1.3" fill="#c9d1d9"/><rect x="40.40" y="213.45" width="7.20" height="1.3" fill="#ff7b72"/><rect x="48.80" y="213.45" width="13.20" height="1.3" fill="#79c0ff"/><rect x="17.60" y="217.51" width="2.40" height="1.3" fill="#ff7b72"/><rect x="21.20" y="217.51" width="16.80" height="1.3" fill="#c9d1d9"/><rect x="39.20" y="217.51" width="2.40" height="1.3" fill="#ff7b72"/><rect x="42.80" y="217.51" width="2.40" height="1.3" fill="#79c0ff"/><rect x="46.40" y="217.51" width="2.40" height="1.3" fill="#c9d1d9"/><rect x="22.40" y="219.54" width="7.20" height="1.3" fill="#ff7b72"/><rect x="30.80" y="219.54" width="3.60" height="1.3" fill="#ff7b72"/><rect x="35.60" y="219.54" width="9.60" height="1.3" fill="#79c0ff"/><rect x="46.40" y="219.54" width="9.60" height="1.3" fill="#c9d1d9"/><rect x="57.20" y="219.54" width="4.80" height="1.3" fill="#79c0ff"/><rect x="17.60" y="221.57" width="1.20" height="1.3" fill="#c9d1d9"/><rect x="17.60" y="225.63" width="2.40" height="1.3" fill="#ff7b72"/><rect x="21.20" y="225.63" width="9.60" height="1.3" fill="#c9d1d9"/><rect x="32.00" y="225.63" width="2.40" height="1.3" fill="#c9d1d9"/><rect x="22.40" y="227.66" width="7.20" height="1.3" fill="#ff7b72"/><rect x="30.80" y="227.66" width="3.60" height="1.3" fill="#ff7b72"/><rect x="35.60" y="227.66" width="9.60" height="1.3" fill="#79c0ff"/><rect x="46.40" y="227.66" width="9.60" height="1.3" fill="#c9d1d9"/><rect x="57.20" y="227.66" width="4.80" height="1.3" fill="#79c0ff"/><rect x="17.60" y="229.69" width="1.20" height="1.3" fill="#c9d1d9"/><rect x="17.60" y="233.75" width="7.20" height="1.3" fill="#ff7b72"/><rect x="26.00" y="233.75" width="7.20" height="1.3" fill="#79c0ff"/><rect x="12.80" y="235.78" width="1.20" height="1.3" fill="#c9d1d9"/><rect x="12.80" y="239.84" width="8.40" height="1.3" fill="#ff7b72"/><rect x="22.40" y="239.84" width="28.80" height="1.3" fill="#d2a8ff"/><rect x="52.40" y="239.84" width="9.60" height="1.3" fill="#ffa657"/><rect x="17.60" y="241.87" width="7.20" height="1.3" fill="#ff7b72"/><rect x="26.00" y="241.87" width="4.80" height="1.3" fill="#79c0ff"/><rect x="32.00" y="241.87" width="24.00" height="1.3" fill="#d2a8ff"/><rect x="57.20" y="241.87" width="4.80" height="1.3" fill="#c9d1d9"/><rect x="12.80" y="245.93" width="8.40" height="1.3" fill="#ff7b72"/><rect x="22.40" y="245.93" width="28.80" height="1.3" fill="#d2a8ff"/><rect x="52.40" y="245.93" width="9.60" height="1.3" fill="#ffa657"/><rect x="17.60" y="247.96" width="7.20" height="1.3" fill="#ff7b72"/><rect x="26.00" y="247.96" width="4.80" height="1.3" fill="#79c0ff"/><rect x="32.00" y="247.96" width="24.00" height="1.3" fill="#d2a8ff"/><rect x="57.20" y="247.96" width="4.80" height="1.3" fill="#c9d1d9"/><rect x="12.80" y="252.02" width="14.40" height="1.3" fill="#ff7b72"/><rect x="28.40" y="252.02" width="24.00" height="1.3" fill="#d2a8ff"/><rect x="53.60" y="252.02" width="8.40" height="1.3" fill="#ffa657"/><rect x="17.60" y="254.05" width="6.00" height="1.3" fill="#ff7b72"/><rect x="24.80" y="254.05" width="9.60" height="1.3" fill="#79c0ff"/><rect x="35.60" y="254.05" width="3.60" height="1.3" fill="#c9d1d9"/><rect x="40.40" y="254.05" width="7.20" height="1.3" fill="#ff7b72"/><rect x="48.80" y="254.05" width="7.20" height="1.3" fill="#79c0ff"/><rect x="57.20" y="254.05" width="4.80" height="1.3" fill="#d2a8ff"/><rect x="17.60" y="258.11" width="2.40" height="1.3" fill="#ff7b72"/><rect x="21.20" y="258.11" width="9.60" height="1.3" fill="#c9d1d9"/><rect x="32.00" y="258.11" width="2.40" height="1.3" fill="#c9d1d9"/><rect x="22.40" y="260.14" width="7.20" height="1.3" fill="#ff7b72"/><rect x="30.80" y="260.14" width="3.60" height="1.3" fill="#ff7b72"/><rect x="35.60" y="260.14" width="9.60" height="1.3" fill="#79c0ff"/><rect x="46.40" y="260.14" width="7.20" height="1.3" fill="#c9d1d9"/><rect x="54.80" y="260.14" width="7.20" height="1.3" fill="#79c0ff"/><rect x="17.60" y="262.17" width="1.20" height="1.3" fill="#c9d1d9"/><rect x="17.60" y="266.23" width="2.40" height="1.3" fill="#ff7b72"/><rect x="21.20" y="266.23" width="14.40" height="1.3" fill="#c9d1d9"/><rect x="36.80" y="266.23" width="2.40" height="1.3" fill="#ff7b72"/><rect x="40.40" y="266.23" width="2.40" height="1.3" fill="#79c0ff"/><rect x="44.00" y="266.23" width="2.40" height="1.3" fill="#c9d1d9"/><rect x="22.40" y="268.26" width="7.20" height="1.3" fill="#ff7b72"/><rect x="30.80" y="268.26" width="3.60" height="1.3" fill="#ff7b72"/><rect x="35.60" y="268.26" width="9.60" height="1.3" fill="#79c0ff"/><rect x="46.40" y="268.26" width="9.60" height="1.3" fill="#c9d1d9"/><rect x="57.20" y="268.26" width="4.80" height="1.3" fill="#79c0ff"/><rect x="17.60" y="270.29" width="1.20" height="1.3" fill="#c9d1d9"/><rect x="17.60" y="274.35" width="7.20" height="1.3" fill="#ff7b72"/><rect x="26.00" y="274.35" width="7.20" height="1.3" fill="#79c0ff"/><rect x="12.80" y="276.38" width="1.20" height="1.3" fill="#c9d1d9"/><rect x="12.80" y="280.44" width="8.40" height="1.3" fill="#ff7b72"/><rect x="22.40" y="280.44" width="28.80" height="1.3" fill="#d2a8ff"/><rect x="52.40" y="280.44" width="9.60" height="1.3" fill="#ffa657"/><rect x="17.60" y="282.47" width="6.00" height="1.3" fill="#ff7b72"/><rect x="24.80" y="282.47" width="7.20" height="1.3" fill="#79c0ff"/><rect x="33.20" y="282.47" width="2.40" height="1.3" fill="#c9d1d9"/><rect x="36.80" y="282.47" width="16.80" height="1.3" fill="#79c0ff"/><rect x="54.80" y="282.47" width="7.20" height="1.3" fill="#d2a8ff"/><rect x="22.40" y="284.50" width="4.80" height="1.3" fill="#c9d1d9"/><rect x="28.40" y="284.50" width="9.60" height="1.3" fill="#79c0ff"/><rect x="39.20" y="284.50" width="2.40" height="1.3" fill="#c9d1d9"/><rect x="22.40" y="286.53" width="4.80" height="1.3" fill="#c9d1d9"/><rect x="28.40" y="286.53" width="19.20" height="1.3" fill="#79c0ff"/><rect x="48.80" y="286.53" width="4.80" height="1.3" fill="#c9d1d9"/><rect x="17.60" y="288.56" width="2.40" height="1.3" fill="#c9d1d9"/><rect x="17.60" y="290.59" width="7.20" height="1.3" fill="#ff7b72"/><rect x="26.00" y="290.59" width="7.20" height="1.3" fill="#79c0ff"/><rect x="12.80" y="292.62" width="1.20" height="1.3" fill="#c9d1d9"/><rect x="8.00" y="294.65" width="1.20" height="1.3" fill="#c9d1d9"/><rect x="8.00" y="298.71" width="7.20" height="1.3" fill="#ff7b72"/><rect x="16.40" y="298.71" width="8.40" height="1.3" fill="#ff7b72"/><rect x="26.00" y="298.71" width="16.80" height="1.3" fill="#79c0ff"/></g><rect x="12.8" y="137.84" width="20.0" height="2.4" fill="#f0a020" opacity=".9"/><rect x="22.4" y="117.54" width="14" height="2.4" fill="#f0a020" opacity=".9"/></svg><div class="a" style="left:1171px;top:308px;width:3px;height:30px;background:#1f6a2c;"></div><div class="a" style="left:1171px;top:342px;width:3px;height:2px;background:#7a5a16;"></div><div class="a" style="left:1171px;top:346px;width:3px;height:34px;background:#6f5616;"></div><div class="a" style="left:1171px;top:381.5px;width:3px;height:19.5px;background:#6f5616;"></div><div class="a" style="left:1171px;top:403.5px;width:3px;height:2px;background:#7a5a16;"></div><div class="a" style="left:1171px;top:391px;width:3px;height:2px;background:#1f6a2c;"></div><div class="a" style="left:1171px;top:394px;width:3px;height:2px;background:#8a2a2a;"></div><div class="a" style="left:1232.5px;top:238px;width:1px;height:540px;background:#080b0f;"></div><div class="a" style="left:1233px;top:428.5px;width:17px;height:70.5px;background:rgba(110,118,129,0.22);"></div><div class="a" style="left:1234px;top:351px;width:5px;height:46.5px;background:#1f4a2a;"></div><div class="a" style="left:1234px;top:402px;width:5px;height:6px;background:#5a4212;"></div><div class="a" style="left:1234px;top:410px;width:5px;height:53px;background:#4a3812;"></div><div class="a" style="left:1234px;top:466px;width:5px;height:37.5px;background:#4a3812;"></div><div class="a" style="left:1239px;top:424px;width:7px;height:5.5px;background:#a07018;"></div><div class="a" style="left:1239px;top:454.5px;width:7px;height:6.8px;background:#a07018;"></div><div class="a" style="left:1233px;top:468px;width:17px;height:2px;background:#4a8cf0;"></div><div class="a" style="left:1234px;top:481px;width:5px;height:2px;background:#2a6a3a;"></div><div class="a" style="left:1234px;top:486px;width:5px;height:2px;background:#7a3030;"></div><div class="a" style="left:1250px;top:167px;width:1px;height:612px;background:#30363d;"></div><div class="a" style="left:1251px;top:167px;width:669px;height:43.5px;background:#010409;"></div><div class="a" style="left:1251px;top:209.5px;width:669px;height:1px;background:#30363d;"></div><div class="a" style="left:1251px;top:167px;width:181px;height:43.5px;background:#0d1117;"></div><div class="a" style="left:1432px;top:167px;width:1px;height:43px;background:#30363d;"></div><svg class="a" style="left:1270px;top:181px;" width="14" height="14" viewBox="0 0 14 14"><path d="M1 2H12M1 5.5H9M1 9H12M1 12.5H7" stroke="#c9d1d9" stroke-width="1.3"/></svg><div class="a t " style="left:1290px;top:181.15px;font-size:15.4px;line-height:18.48px;color:#9198a1;font-style:italic">Simple Browser</div><svg class="a" style="left:1408px;top:183px;" width="12" height="12" viewBox="0 0 12 12"><path d="M1 1L11 11M11 1L1 11" stroke="#7d8590" stroke-width="1.4"/></svg><div class="a" style="left:1847px;top:175px;width:28px;height:28px;background:#1a3a6a;border-radius:5px"></div><svg class="a" style="left:1852px;top:179px;" width="18" height="20" viewBox="0 0 18 20"><rect x="2" y="9" width="14" height="10" rx="1.5" fill="none" stroke="#c9d1d9" stroke-width="1.6"/><path d="M5 9V6A4 4 0 0 1 13 6V9" fill="none" stroke="#c9d1d9" stroke-width="1.6"/></svg><div class="a" style="left:1886px;top:188px;width:3px;height:3px;background:#c9d1d9;border-radius:50%"></div><div class="a" style="left:1893px;top:188px;width:3px;height:3px;background:#c9d1d9;border-radius:50%"></div><div class="a" style="left:1900px;top:188px;width:3px;height:3px;background:#c9d1d9;border-radius:50%"></div><div class="a" style="left:1251px;top:210.5px;width:669px;height:41.5px;background:#0d1117;"></div><svg class="a" style="left:1270px;top:223px;" width="18" height="16" viewBox="0 0 18 16"><path d="M2 8H16M8 2L2 8L8 14" stroke="#9198a1" fill="none" stroke-width="1.4" stroke-linecap="round" stroke-linejoin="round"/></svg><svg class="a" style="left:1303px;top:223px;" width="18" height="16" viewBox="0 0 18 16"><path d="M2 8H16M10 2L16 8L10 14" stroke="#9198a1" fill="none" stroke-width="1.4" stroke-linecap="round" stroke-linejoin="round"/></svg><svg class="a" style="left:1336px;top:222px;" width="18" height="18" viewBox="0 0 18 18"><path d="M15 9A6 6 0 1 1 9 3" stroke="#9198a1" fill="none" stroke-width="1.4" stroke-linecap="round" stroke-linejoin="round"/><path d="M9 0.5V5.5" stroke="#9198a1" fill="none" stroke-width="1.4" stroke-linecap="round" stroke-linejoin="round"/></svg><div class="a t " style="left:1368px;top:222.54px;font-size:17.2px;line-height:20.64px;color:#e6edf3;letter-spacing:-0.13px">https://verbose-dollop-57g57qww9xw377vx-4200.app.github.dev/</div><svg class="a" style="left:1876px;top:221px;" width="20" height="20" viewBox="0 0 20 20"><path d="M9 3H2V18H17V11M12 2H18V8M18 2L9 11" stroke="#9198a1" fill="none" stroke-width="1.4" stroke-linecap="round" stroke-linejoin="round"/></svg><div class="a" style="left:1252px;top:252px;width:668px;height:527px;background:#f9f9f9;"></div><div class="a" style="left:1252px;top:252px;width:648px;height:69px;background:#f3e0fc;"></div><div class="a" style="left:1252px;top:320.5px;width:648px;height:1px;background:#77737a;"></div><div class="a t " style="left:1407px;top:274.89px;font-size:26.3px;line-height:31.56px;color:#1f2d36;">Library Management System</div><div class="a" style="left:1252px;top:321.5px;width:648px;height:75.5px;background:#ffffff;"></div><div class="a t " style="left:1269px;top:343.45px;font-size:26.7px;line-height:32.04px;color:#0e2a28;-webkit-text-stroke:0.6px #0e2a28">Luscious Alligator</div><svg class="a" style="left:1490px;top:336px;" width="45" height="45" viewBox="0 0 45 45"><defs><clipPath id="avc"><circle cx="22.5" cy="22.5" r="22.5"/></clipPath></defs><circle cx="22.5" cy="22.5" r="22.5" fill="#2ec0a3"/><g clip-path="url(#avc)"><path d="M13 34V15C13 8 17 5 22.5 5C28 5 32 8 32 15V34Z" fill="#1b1b1b"/><rect x="17" y="11" width="11" height="20" rx="5" fill="#f0c3a0"/><path d="M16 12C18 8 27 8 29 12L29 10C27 6 18 6 16 10Z" fill="#1b1b1b"/><rect x="14.5" y="16" width="16" height="6" rx="1.5" fill="#bfe6e6" stroke="#4a5a5a" stroke-width="1"/><path d="M20 29H25V33H20Z" fill="#e8b490"/><path d="M7 45C7 36 14 33 22.5 33C31 33 38 36 38 45Z" fill="#f2f5f7"/><path d="M20 33L22.5 37L25 33" fill="#dfe6ea"/></g></svg><div class="a t " style="left:1769px;top:343.14px;font-size:27.2px;line-height:32.64px;color:#0e2a28;-webkit-text-stroke:0.6px #0e2a28">Admin</div><svg class="a" style="left:1858px;top:348px;" width="23" height="23" viewBox="0 0 23 23"><path d="M9.5 1H13.5L14.2 4.2L16.8 5.5L19.8 3.9L22.2 7L20 9.6V13.4L22.2 16L19.8 19.1L16.8 17.5L14.2 18.8L13.5 22H9.5L8.8 18.8L6.2 17.5L3.2 19.1L0.8 16L3 13.4V9.6L0.8 7L3.2 3.9L6.2 5.5L8.8 4.2Z" fill="#0e2a28"/><circle cx="11.5" cy="11.5" r="3.6" fill="#fff"/></svg><div class="a" style="left:1275px;top:421px;width:600px;height:70px;background:transparent;border:1px solid #b9b9b9;border-radius:5px"></div><div class="a" style="left:1290px;top:416px;width:104px;height:10px;background:#f9f9f9;"></div><div class="a t " style="left:1295px;top:414.90px;font-size:15px;line-height:18.00px;color:#6b6b6b;">Find books...*</div><div class="a t " style="left:1295px;top:444.37px;font-size:21.5px;line-height:25.80px;color:#1f1f1f;">cooking</div><svg class="a" style="left:1832px;top:444px;" width="24" height="24" viewBox="0 0 24 24"><circle cx="9" cy="9" r="6.5" fill="none" stroke="#111" stroke-width="2.6"/><path d="M14 14L21 21" stroke="#111" stroke-width="3" stroke-linecap="round"/></svg><div class="a" style="left:1388px;top:555px;width:312px;height:230px;background:#ffffff;border-radius:6px;box-shadow:0 1px 3px rgba(0,0,0,.12)"></div><div class="a" style="left:1490px;top:570px;width:108px;height:166px;box-shadow:0 9px 16px rgba(0,0,0,.38)"></div><svg class="a" style="left:1490px;top:570px;" width="108" height="166" viewBox="0 0 108 166"><defs><filter id="bl" x="-10%" y="-10%" width="120%" height="120%"><feGaussianBlur stdDeviation="1.1"/></filter><clipPath id="cc"><rect width="108" height="166"/></clipPath></defs>
<g clip-path="url(#cc)">
<rect width="108" height="166" fill="#e9ece4"/>
<rect width="108" height="9" fill="#2f5e2c"/>
<rect y="8" width="108" height="39" fill="#f1e6cc"/>
<g filter="url(#bl)">
<rect x="0" y="46" width="108" height="120" fill="#c9d3c0"/>
<rect x="55" y="46" width="53" height="75" fill="#5c9548"/>
<ellipse cx="88" cy="58" rx="28" ry="16" fill="#3f7a32"/>
<ellipse cx="72" cy="82" rx="14" ry="22" fill="#7fb062"/>
<ellipse cx="98" cy="80" rx="12" ry="16" fill="#a9c998"/>
<ellipse cx="85" cy="100" rx="10" ry="10" fill="#4d8a3a"/>
<rect x="1" y="48" width="60" height="68" fill="#eef0ec"/>
<rect x="0" y="48" width="10" height="70" fill="#dfe3e0"/>
<rect x="4" y="58" width="6" height="12" fill="#5a6460"/><rect x="4" y="82" width="6" height="14" fill="#5a6460"/>
<rect x="16" y="56" width="3" height="62" fill="#b8bdb8"/><rect x="32" y="56" width="3" height="62" fill="#b8bdb8"/><rect x="48" y="56" width="3" height="62" fill="#b8bdb8"/>
<rect x="20" y="60" width="10" height="13" fill="#6d7671"/><rect x="36" y="62" width="9" height="11" fill="#6d7671"/><rect x="20" y="86" width="10" height="14" fill="#757e79"/><rect x="36" y="88" width="9" height="12" fill="#757e79"/>
<rect x="12" y="76" width="46" height="3" fill="#9aa09c"/>
<path d="M86 112L108 94V114Z" fill="#d44a2a"/><path d="M92 110L108 99V105Z" fill="#f4efe8"/>
<ellipse cx="40" cy="116" rx="20" ry="9" fill="#3f7d35"/><ellipse cx="75" cy="120" rx="24" ry="11" fill="#356f2e"/><ellipse cx="8" cy="122" rx="10" ry="8" fill="#4c8a3d"/>
<ellipse cx="10" cy="150" rx="13" ry="17" fill="#e8ebe2"/>
<ellipse cx="12" cy="138" rx="8" ry="5" fill="#6a9a4a"/>
<ellipse cx="28" cy="131" rx="14" ry="8" fill="#d25a28"/><ellipse cx="35" cy="128" rx="7" ry="5" fill="#a8321e"/>
<ellipse cx="20" cy="125" rx="7" ry="4" fill="#7fa84e"/>
<ellipse cx="66" cy="141" rx="17" ry="10" fill="#b9bbb6"/><ellipse cx="66" cy="137" rx="13" ry="7" fill="#dcdcd8"/>
<ellipse cx="42" cy="156" rx="19" ry="10" fill="#b86a28"/><ellipse cx="42" cy="153" rx="14" ry="6" fill="#d8953e"/>
<circle cx="57" cy="161" r="3.2" fill="#cc3a22"/><circle cx="28" cy="163" r="3" fill="#cc3a22"/><circle cx="63" cy="154" r="2.6" fill="#cc3a22"/><circle cx="50" cy="164" r="2.6" fill="#cc3a22"/>
<ellipse cx="96" cy="150" rx="13" ry="12" fill="#e2d8c0"/><ellipse cx="92" cy="130" rx="8" ry="9" fill="#d7e0cc"/>
<ellipse cx="80" cy="160" rx="9" ry="6" fill="#7ea56a"/><ellipse cx="104" cy="132" rx="5" ry="10" fill="#5c8f48"/>
</g>
<text x="54" y="21" font-family="Liberation Serif" font-style="italic" font-size="8.5" fill="#222" text-anchor="middle">Charles Patteson's</text>
<text x="54" y="35" font-family="Liberation Serif" font-style="italic" font-size="14" fill="#111" text-anchor="middle" letter-spacing="-0.4">Kentucky Cooking</text>
<text x="54" y="43" font-family="Liberation Sans" font-size="4" fill="#333" text-anchor="middle" letter-spacing="0.3">CHARLES PATTESON &amp; ELEANOR ANDERSON</text>
<rect y="164" width="108" height="2" fill="#4a4a3a"/>
</g></svg><div class="a t " style="left:1410px;top:771.18px;font-size:21px;line-height:25.20px;color:#0e2a28;-webkit-text-stroke:0.5px #0e2a28">Charles Patteson's Kentucky</div><div class="a" style="left:1659px;top:769px;width:21px;height:9px;background:#eeeeee;"></div><div class="a" style="left:1900px;top:252px;width:20px;height:527px;background:#f1f1f1;"></div><svg class="a" style="left:1906px;top:257px;" width="9" height="6" viewBox="0 0 9 6"><path d="M0 6L4.5 0L9 6Z" fill="#505050"/></svg><div class="a" style="left:1903px;top:275px;width:14px;height:20px;background:#c1c1c1;"></div><svg class="a" style="left:1906px;top:765px;" width="9" height="6" viewBox="0 0 9 6"><path d="M0 0L4.5 6L9 0Z" fill="#505050"/></svg><div class="a" style="left:579px;top:778px;width:1341px;height:275px;background:#010409;"></div><div class="a" style="left:579px;top:778px;width:1341px;height:1px;background:#30363d;"></div><div class="a t " style="left:604px;top:794.45px;font-size:12.5px;line-height:15.00px;color:#9198a1;">PROBLEMS</div><div class="a t " style="left:701px;top:794.45px;font-size:12.5px;line-height:15.00px;color:#9198a1;">OUTPUT</div><div class="a t " style="left:783px;top:794.45px;font-size:12.5px;line-height:15.00px;color:#9198a1;">DEBUG CONSOLE</div><div class="a t " style="left:919px;top:794.20px;font-size:12.9px;line-height:15.48px;color:#e6edf3;">TERMINAL</div><div class="a t " style="left:1013px;top:794.45px;font-size:12.5px;line-height:15.00px;color:#9198a1;">PORTS</div><div class="a t " style="left:1116px;top:794.45px;font-size:12.5px;line-height:15.00px;color:#9198a1;">COMMENTS</div><div class="a" style="left:917px;top:813px;width:69px;height:2px;background:#f78166;"></div><div class="a" style="left:1065px;top:789px;width:22px;height:22px;background:#1f6feb;border-radius:50%"></div><div class="a t " style="left:1071px;top:793.02px;font-size:14px;line-height:16.80px;color:#fff;">2</div><svg class="a" style="left:1768px;top:790px;" width="20" height="20" viewBox="0 0 20 20"><path d="M10 2V18M2 10H18" stroke="#c9d1d9" stroke-width="1.5"/></svg><svg class="a" style="left:1794px;top:796px;" width="11" height="8" viewBox="0 0 11 8"><path d="M1 1.5L5.5 6L10 1.5" stroke="#c9d1d9" fill="none" stroke-width="1.4" stroke-linecap="round" stroke-linejoin="round"/></svg><div class="a" style="left:1820px;top:799px;width:3px;height:3px;background:#c9d1d9;border-radius:50%"></div><div class="a" style="left:1827px;top:799px;width:3px;height:3px;background:#c9d1d9;border-radius:50%"></div><div class="a" style="left:1834px;top:799px;width:3px;height:3px;background:#c9d1d9;border-radius:50%"></div><svg class="a" style="left:1851px;top:793px;" width="18" height="11" viewBox="0 0 18 11"><path d="M1.5 9.5L9 2L16.5 9.5" stroke="#c9d1d9" fill="none" stroke-width="1.4" stroke-linecap="round" stroke-linejoin="round"/></svg><svg class="a" style="left:1885px;top:793px;" width="15" height="15" viewBox="0 0 15 15"><path d="M1 1L14 14M14 1L1 14" stroke="#c9d1d9" stroke-width="1.5"/></svg><div class="a" style="left:1772px;top:822px;width:1px;height:230px;background:#30363d;"></div><div class="a" style="left:1773px;top:851px;width:147px;height:27px;background:#272b33;"></div><svg class="a" style="left:1787px;top:827px;" width="17" height="19" viewBox="0 0 17 19"><path d="M8.5 1L16 5.2V13.8L8.5 18L1 13.8V5.2Z" fill="none" stroke="#8b949e" stroke-width="1.2"/><path d="M8.5 9.5L16 5.2V13.8L8.5 18Z" fill="#6e7681"/></svg><div class="a t " style="left:1810px;top:828.28px;font-size:15.2px;line-height:18.24px;color:#e6edf3;">bash</div><svg class="a" style="left:1787px;top:855px;" width="17" height="19" viewBox="0 0 17 19"><path d="M8.5 1L16 5.2V13.8L8.5 18L1 13.8V5.2Z" fill="none" stroke="#8b949e" stroke-width="1.2"/><path d="M8.5 9.5L16 5.2V13.8L8.5 18Z" fill="#6e7681"/></svg><div class="a t " style="left:1810px;top:856.28px;font-size:15.2px;line-height:18.24px;color:#e6edf3;">Codespaces...</div><svg class="a" style="left:1787px;top:882px;" width="17" height="19" viewBox="0 0 17 19"><path d="M8.5 1L16 5.2V13.8L8.5 18L1 13.8V5.2Z" fill="none" stroke="#8b949e" stroke-width="1.2"/><path d="M8.5 9.5L16 5.2V13.8L8.5 18Z" fill="#6e7681"/></svg><div class="a t " style="left:1810px;top:883.28px;font-size:15.2px;line-height:18.24px;color:#e6edf3;">Codespaces...</div><svg class="a" style="left:1787px;top:910px;" width="17" height="19" viewBox="0 0 17 19"><path d="M8.5 1L16 5.2V13.8L8.5 18L1 13.8V5.2Z" fill="none" stroke="#8b949e" stroke-width="1.2"/><path d="M8.5 9.5L16 5.2V13.8L8.5 18Z" fill="#6e7681"/></svg><div class="a t " style="left:1810px;top:911.28px;font-size:15.2px;line-height:18.24px;color:#e6edf3;">Codespaces...</div><div class="a t m" style="left:604px;top:880.80px;font-size:15px;line-height:20px;color:#e6edf3">&gt; server@1.0.0 build</div><div class="a t m" style="left:604px;top:902.80px;font-size:15px;line-height:20px;color:#e6edf3">&gt; rimraf ./dist &amp;&amp; tsc</div><div class="a t m" style="left:604px;top:946.80px;font-size:15px;line-height:20px;color:#e6edf3">Connected to database!</div><div class="a t m" style="left:604px;top:968.80px;font-size:15px;line-height:20px;color:#e6edf3">Server is running on port: 5000</div><div class="a t m" style="left:604px;top:990.80px;font-size:15px;line-height:20px;color:#e6edf3">GET /books/search?term=do <span style="color:#3fb950">200</span> 105.422 ms - 593938</div><div class="a t m" style="left:604px;top:1012.80px;font-size:15px;line-height:20px;color:#e6edf3">GET /books/search?term=cooking <span style="color:#3fb950">200</span> 161.692 ms - 1239405</div><div class="a" style="left:144px;top:1052.5px;width:1776px;height:27.5px;background:#0d1117;"></div><div class="a" style="left:144px;top:1052.5px;width:1776px;height:1px;background:#30363d;"></div><div class="a" style="left:144px;top:1053.5px;width:231px;height:26.5px;background:#262c36;"></div><svg class="a" style="left:160px;top:1057px;" width="18" height="20" viewBox="0 0 18 20"><path d="M2 8L6.5 12.5L2 17M16 3L11.5 7.5L16 12" stroke="#e6edf3" stroke-width="1.5" fill="none" stroke-linecap="round" stroke-linejoin="round"/></svg><div class="a t " style="left:178px;top:1058.65px;font-size:14.6px;line-height:17.52px;color:#e6edf3;">Codespaces: verbose dollop</div><svg class="a" style="left:384px;top:1057px;" width="18" height="20" viewBox="0 0 18 20"><circle cx="4" cy="3.5" r="2.3" stroke="#9198a1" fill="none" stroke-width="1.4" stroke-linecap="round" stroke-linejoin="round"/><circle cx="4" cy="16.5" r="2.3" stroke="#9198a1" fill="none" stroke-width="1.4" stroke-linecap="round" stroke-linejoin="round"/><circle cx="14" cy="6" r="2.3" stroke="#9198a1" fill="none" stroke-width="1.4" stroke-linecap="round" stroke-linejoin="round"/><path d="M4 6V14M14 8.5C14 12 6 11 4.5 14" stroke="#9198a1" fill="none" stroke-width="1.4" stroke-linecap="round" stroke-linejoin="round"/></svg><div class="a t " style="left:404px;top:1058.28px;font-size:15.2px;line-height:18.24px;color:#9198a1;">main*</div><svg class="a" style="left:450px;top:1057px;" width="19" height="19" viewBox="0 0 19 19"><path d="M3 9A6.5 6.5 0 0 1 15 6M16 10A6.5 6.5 0 0 1 4 13M15 2V6H11M4 17V13H8" stroke="#9198a1" fill="none" stroke-width="1.4" stroke-linecap="round" stroke-linejoin="round"/></svg><svg class="a" style="left:486px;top:1057px;" width="19" height="19" viewBox="0 0 19 19"><circle cx="9.5" cy="9.5" r="7.5" stroke="#9198a1" fill="none" stroke-width="1.4" stroke-linecap="round" stroke-linejoin="round"/><path d="M6.5 6.5L12.5 12.5M12.5 6.5L6.5 12.5" stroke="#9198a1" fill="none" stroke-width="1.4" stroke-linecap="round" stroke-linejoin="round"/></svg><div class="a t " style="left:509px;top:1058.28px;font-size:15.2px;line-height:18.24px;color:#9198a1;">0</div><svg class="a" style="left:521px;top:1056px;" width="20" height="19" viewBox="0 0 20 19"><path d="M10 2L18.5 17H1.5Z" stroke="#9198a1" fill="none" stroke-width="1.4" stroke-linecap="round" stroke-linejoin="round"/><path d="M10 7.5V12M10 14V15" stroke="#9198a1" fill="none" stroke-width="1.4" stroke-linecap="round" stroke-linejoin="round"/></svg><div class="a t " style="left:543px;top:1058.28px;font-size:15.2px;line-height:18.24px;color:#9198a1;">0</div><svg class="a" style="left:570px;top:1056px;" width="20" height="20" viewBox="0 0 20 20"><path d="M10 9L6 19M10 9L14 19M7 15H13M5 4A7 7 0 0 0 5 14M15 4A7 7 0 0 1 15 14M7.5 6.5A3.5 3.5 0 0 0 7.5 11.5M12.5 6.5A3.5 3.5 0 0 1 12.5 11.5" stroke="#9198a1" fill="none" stroke-width="1.4" stroke-linecap="round" stroke-linejoin="round"/><circle cx="10" cy="9" r="1.3" fill="#9198a1"/></svg><div class="a t " style="left:591px;top:1058.28px;font-size:15.2px;line-height:18.24px;color:#9198a1;">2</div><div class="a t " style="left:1398px;top:1058.83px;font-size:14.3px;line-height:17.16px;color:#9198a1;">Ln 107, Col 28</div><div class="a t " style="left:1512px;top:1058.83px;font-size:14.3px;line-height:17.16px;color:#9198a1;">Spaces: 4</div><div class="a t " style="left:1593px;top:1058.83px;font-size:14.3px;line-height:17.16px;color:#9198a1;">UTF-8</div><div class="a t " style="left:1652px;top:1058.83px;font-size:14.3px;line-height:17.16px;color:#9198a1;">LF</div><div class="a t " style="left:1710px;top:1058.83px;font-size:14.3px;line-height:17.16px;color:#9198a1;">TypeScript</div><div class="a t " style="left:1795px;top:1058.83px;font-size:14.3px;line-height:17.16px;color:#9198a1;">Layout: US</div><div class="a t " style="left:1686px;top:1057.83px;font-size:14.3px;line-height:17.16px;color:#9198a1;letter-spacing:-1px">{ }</div><svg class="a" style="left:1883px;top:1056px;" width="20" height="20" viewBox="0 0 20 20"><path d="M4 14V9A6 6 0 0 1 12 3.5M4 14L2 16H16L14 14V11M8 18A2 2 0 0 0 12 18" stroke="#9198a1" fill="none" stroke-width="1.4" stroke-linecap="round" stroke-linejoin="round"/><circle cx="15" cy="5" r="3" fill="#9198a1"/></svg><div class="a" style="left:0px;top:1078px;width:45px;height:2px;background:#000;"></div><div class="a" style="left:45px;top:1078px;width:323px;height:2px;background:#e6e6e6;"></div><div class="a" style="left:392px;top:1078px;width:44px;height:2px;background:#555;"></div></body></html>
